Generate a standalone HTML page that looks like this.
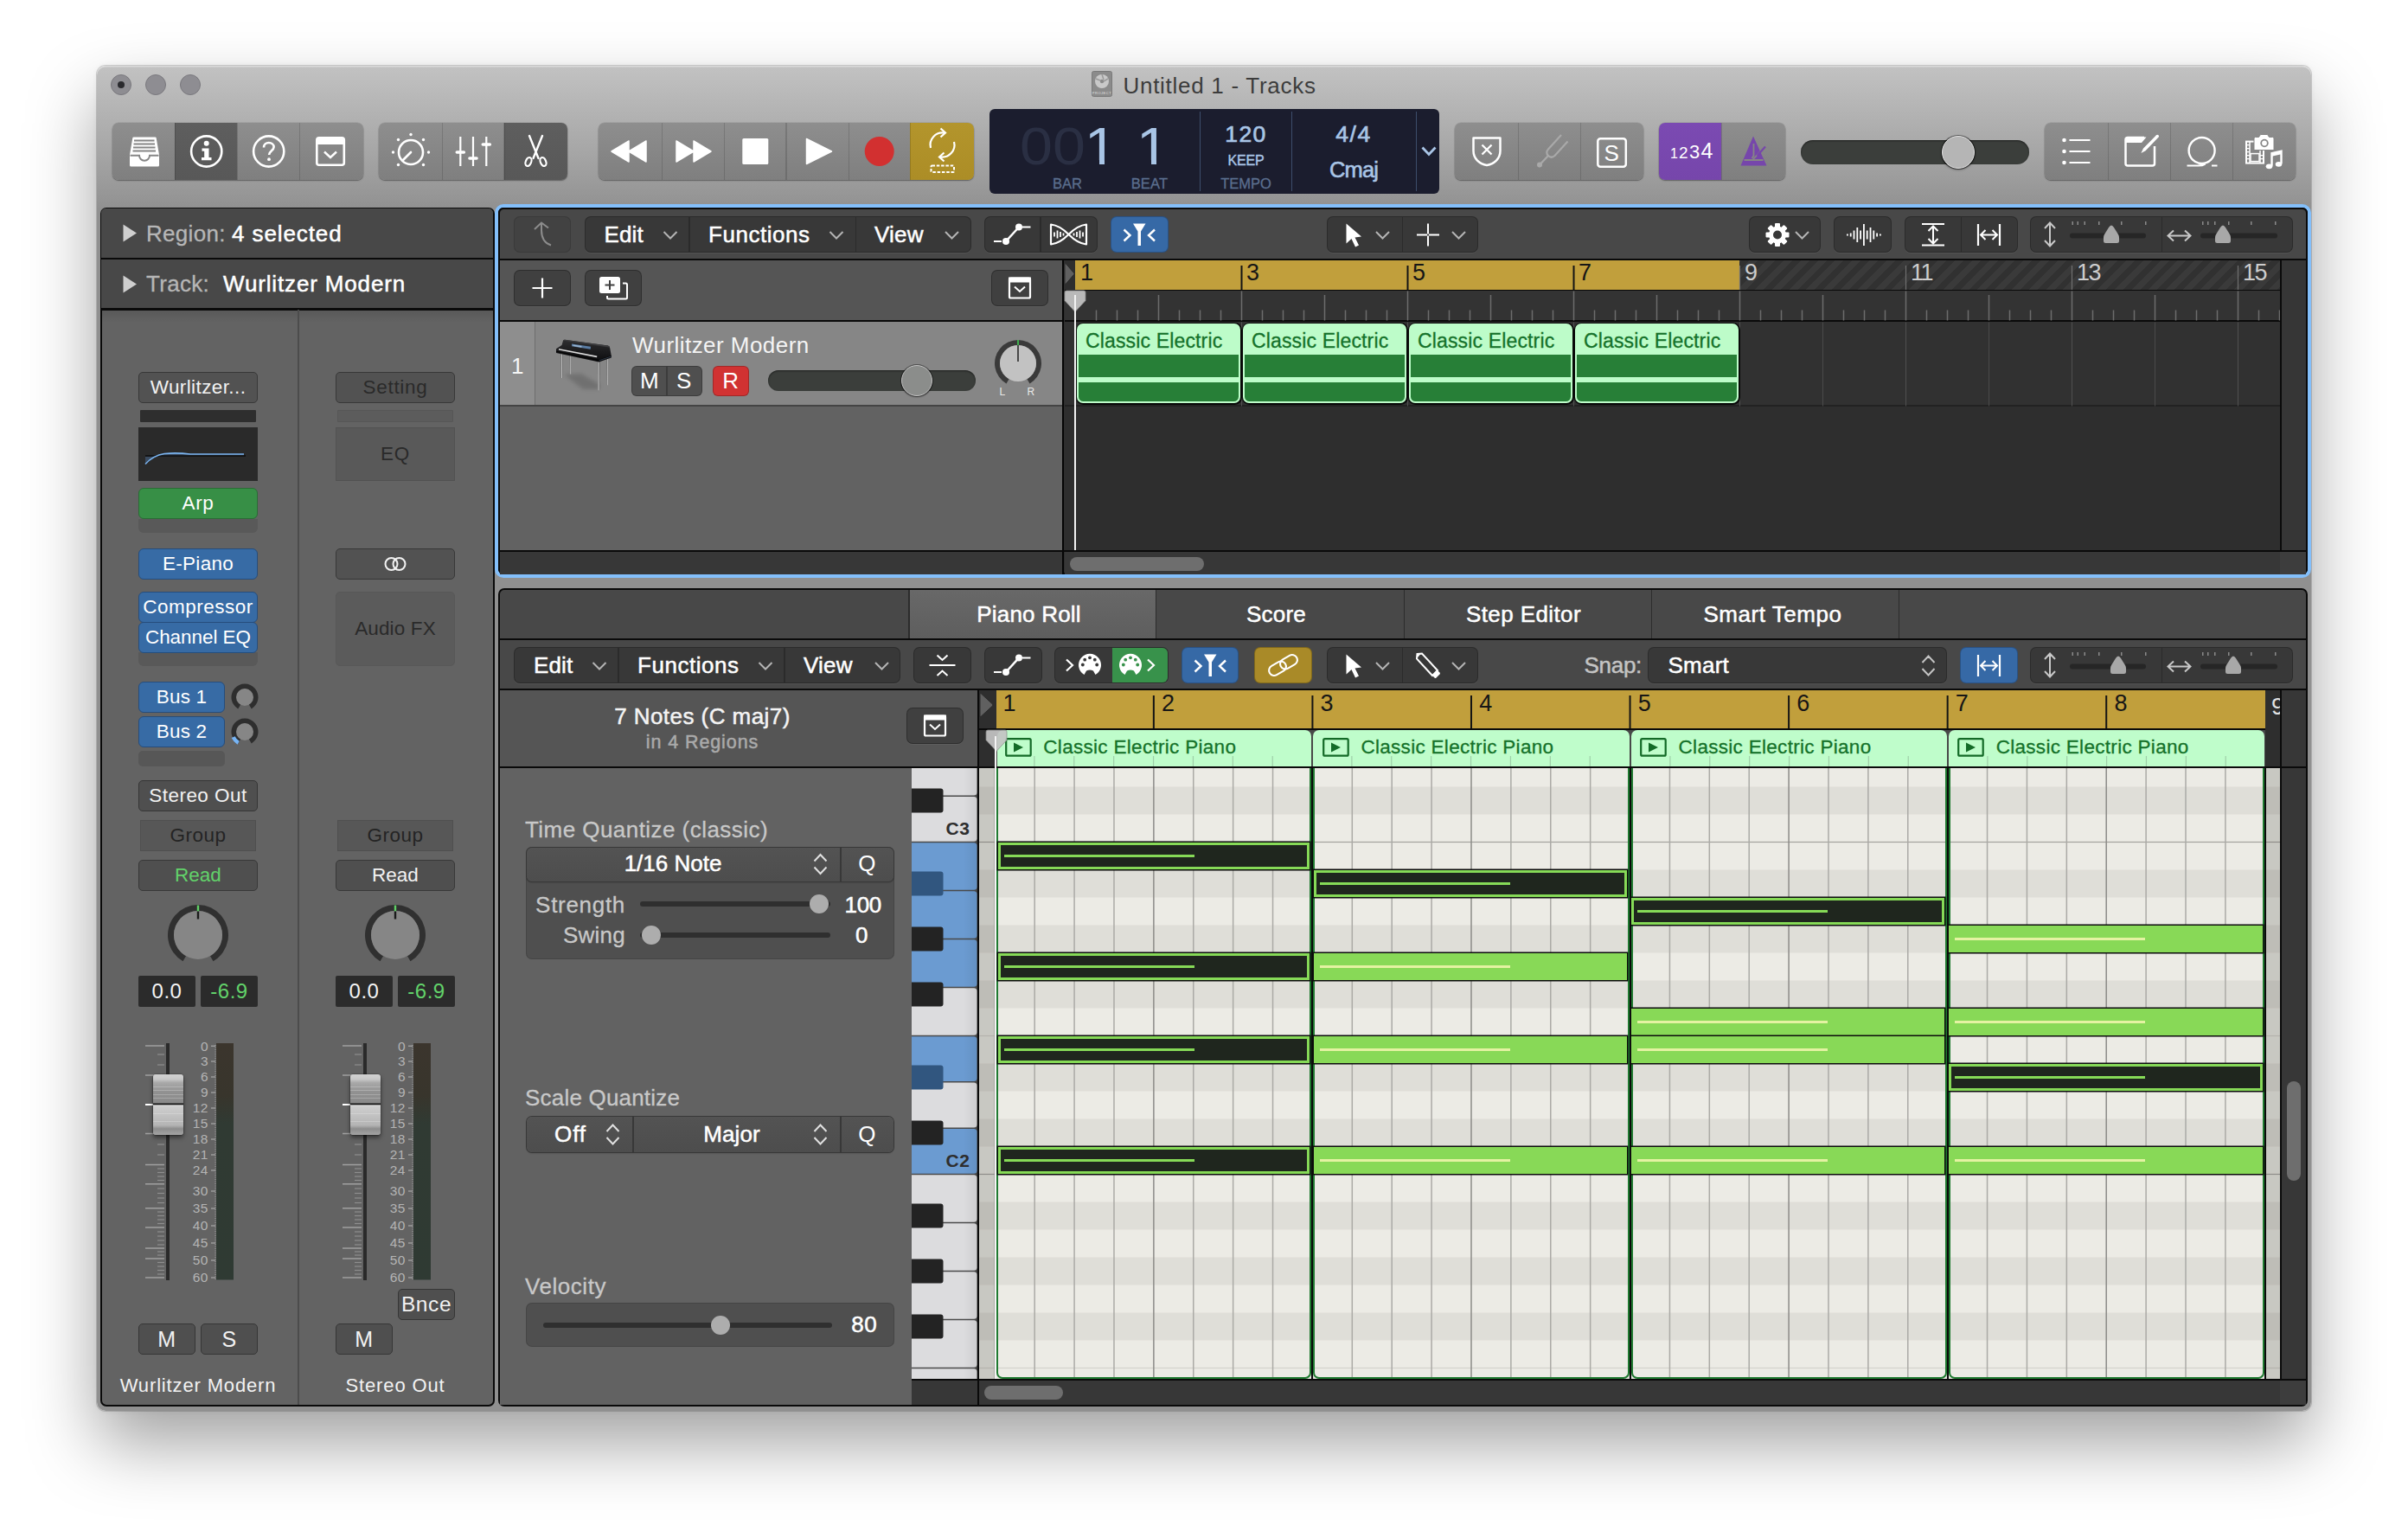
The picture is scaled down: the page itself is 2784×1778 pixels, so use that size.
<!DOCTYPE html>
<html lang="en"><head><meta charset="utf-8"><title>Untitled 1 - Tracks</title>
<style>
html,body{margin:0;padding:0;}
body{width:2784px;height:1778px;position:relative;overflow:hidden;background:#fff;font-family:"Liberation Sans",sans-serif;font-size:26px;color:#fff;letter-spacing:0.02em;}
div,svg{position:absolute;box-sizing:border-box;}
.t{white-space:nowrap;overflow:visible;}
.c{text-align:center;}
.r{text-align:right;}
.m{-webkit-text-stroke:0.5px currentColor;}

</style></head>
<body>
<div style="left:112px;top:76px;width:2560px;height:1555px;border-radius:10px;background:linear-gradient(#c2c2c2 0px,#b8b8b8 36px,#a6a6a6 100px,#969696 150px,#909090 166px,#909090 100%);box-shadow:inset 0 1.5px 0 rgba(255,255,255,0.4),0 0 0 1px rgba(0,0,0,0.16),0 38px 80px 0px rgba(0,0,0,0.37),0 0 6px rgba(0,0,0,0.06);"></div>
<div style="left:128px;top:86px;width:24px;height:24px;border-radius:50%;background:#8e8d92;border:1px solid #7a797e;"><div style="left:7px;top:7px;width:8px;height:8px;border-radius:50%;background:#2a2a2e;"></div></div>
<div style="left:168px;top:86px;width:24px;height:24px;border-radius:50%;background:#8e8d92;border:1px solid #7a797e;"></div>
<div style="left:208px;top:86px;width:24px;height:24px;border-radius:50%;background:#8e8d92;border:1px solid #7a797e;"></div>
<svg style="left:1262px;top:82px;" width="24" height="30" viewBox="0 0 24 30"><rect x="0.5" y="0.5" width="23" height="29" rx="2" fill="#8b8b8b" stroke="#7a7a7a"/><circle cx="12" cy="12" r="8" fill="#c9c9c9"/><circle cx="12" cy="12" r="2.2" fill="#8b8b8b"/><path d="M12 4 L14 10 M19 9 L14 12 M5 9 L10 11" stroke="#9a9a9a" stroke-width="1.5"/><text x="12" y="26.5" font-size="4" text-anchor="middle" fill="#e0e0e0" font-family="Liberation Sans, sans-serif">PROJECT</text></svg>
<div class="t" style="left:1298.5px;top:84px;width:230px;height:30px;line-height:30px;color:#3c3c3c;font-size:26px;letter-spacing:0.72px;">Untitled 1 - Tracks</div>
<div style="left:130px;top:142px;width:290px;height:66px;border-radius:7px;box-shadow:0 1px 1.5px rgba(0,0,0,0.35),0 0 0 0.5px rgba(0,0,0,0.12);overflow:hidden;"><div style="left:0.00px;top:0;width:72.50px;height:66px;background:linear-gradient(#8e8e8e,#7f7f7f);"></div><div style="left:72.00px;top:0;width:72.50px;height:66px;background:linear-gradient(#5e5e5e,#585858);"></div><div style="left:144.00px;top:0;width:72.75px;height:66px;background:linear-gradient(#8e8e8e,#7f7f7f);"></div><div style="left:216.25px;top:0;width:74.25px;height:66px;background:linear-gradient(#8e8e8e,#7f7f7f);"></div><div style="left:71.50px;top:0;width:1.500px;height:66px;background:rgba(0,0,0,0.14);"></div><div style="left:143.50px;top:0;width:1.500px;height:66px;background:rgba(0,0,0,0.14);"></div><div style="left:215.75px;top:0;width:1.500px;height:66px;background:rgba(0,0,0,0.14);"></div></div>
<svg style="left:130px;top:142px;" width="72" height="66" viewBox="0 0 72 66"><path d="M24 16.5h25.5q1 0 1.2 1l3.3 19.5v12q0 1.5-1.5 1.5h-31q-1.500 0-1.500-1.500v-12l3.300-19.500q0.200-1 1.200-1z" fill="#fff"/><path d="M25 20.500h23.500M24.500 24.500h24.500M24 28.500h25.500M23.500 32.500h26.500" stroke="#868686" stroke-width="1.800"/><path d="M20.500 37.800h10.500a6 6 0 0 0 12 0h10.500" stroke="#868686" stroke-width="2" fill="none"/></svg>
<svg style="left:202.25px;top:142px;" width="72" height="66" viewBox="0 0 72 66"><circle cx="36.700" cy="33" r="17.600" fill="none" stroke="#fff" stroke-width="2.600"/><circle cx="36.700" cy="23.800" r="3" fill="#fff"/><path d="M31.500 29.500h8v10.500h3v3.200h-11.500v-3.200h3.200v-7.300h-2.700z" fill="#fff"/></svg>
<svg style="left:274px;top:142px;" width="72" height="66" viewBox="0 0 72 66"><circle cx="36.700" cy="33" r="17.600" fill="none" stroke="#fff" stroke-width="2.600"/><path d="M31 28.500c0-3.500 2.500-5.500 5.800-5.500s5.800 2 5.800 5c0 4-5.500 4.500-5.500 9" fill="none" stroke="#fff" stroke-width="2.600"/><circle cx="37" cy="42.200" r="1.900" fill="#fff"/></svg>
<svg style="left:345.5px;top:142px;" width="72" height="66" viewBox="0 0 72 66"><rect x="20.300" y="17.300" width="31.500" height="31.500" rx="2.500" fill="none" stroke="#fff" stroke-width="2.600"/><rect x="20" y="17" width="32" height="8" fill="#fff"/><path d="M29 33.500l7 6.500l7-6.500" fill="none" stroke="#fff" stroke-width="2.400"/></svg>
<div style="left:438px;top:142px;width:218px;height:66px;border-radius:7px;box-shadow:0 1px 1.5px rgba(0,0,0,0.35),0 0 0 0.5px rgba(0,0,0,0.12);overflow:hidden;"><div style="left:0.00px;top:0;width:73.75px;height:66px;background:linear-gradient(#8e8e8e,#7f7f7f);"></div><div style="left:73.25px;top:0;width:71.75px;height:66px;background:linear-gradient(#8e8e8e,#7f7f7f);"></div><div style="left:144.50px;top:0;width:74.00px;height:66px;background:linear-gradient(#5e5e5e,#585858);"></div><div style="left:72.75px;top:0;width:1.500px;height:66px;background:rgba(0,0,0,0.14);"></div><div style="left:144.00px;top:0;width:1.500px;height:66px;background:rgba(0,0,0,0.14);"></div></div>
<svg style="left:438px;top:142px;" width="72" height="66" viewBox="0 0 72 66"><circle cx="37" cy="34" r="14" fill="none" stroke="#fff" stroke-width="2.600"/><path d="M37 34l-9.500 9.500" stroke="#fff" stroke-width="2.600" stroke-linecap="round"/><circle cx="22.5" cy="48.5" r="1.700" fill="#fff"/><circle cx="16.5" cy="34.0" r="1.700" fill="#fff"/><circle cx="22.5" cy="19.5" r="1.700" fill="#fff"/><circle cx="37.0" cy="13.5" r="1.700" fill="#fff"/><circle cx="51.5" cy="19.5" r="1.700" fill="#fff"/><circle cx="57.5" cy="34.0" r="1.700" fill="#fff"/><circle cx="51.5" cy="48.5" r="1.700" fill="#fff"/></svg>
<svg style="left:510.67px;top:142px;" width="72" height="66" viewBox="0 0 72 66"><path d="M21.300 16v34M36 16v34M51.300 16v34" stroke="#fff" stroke-width="2.200"/><path d="M17.300 34h8M32 41h8M47.300 25h8" stroke="#fff" stroke-width="3.600" stroke-linecap="round"/></svg>
<svg style="left:583.33px;top:142px;" width="72" height="66" viewBox="0 0 72 66"><path d="M29 15l10.500 26M44 15l-10.500 26" stroke="#fff" stroke-width="2.400" stroke-linecap="round"/><ellipse cx="28" cy="45" rx="3.200" ry="5.200" transform="rotate(22 28 45)" fill="none" stroke="#fff" stroke-width="2.200"/><ellipse cx="45" cy="45" rx="3.200" ry="5.200" transform="rotate(-22 45 45)" fill="none" stroke="#fff" stroke-width="2.200"/></svg>
<div style="left:692px;top:142px;width:434px;height:66px;border-radius:7px;box-shadow:0 1px 1.5px rgba(0,0,0,0.35),0 0 0 0.5px rgba(0,0,0,0.12);overflow:hidden;"><div style="left:0.00px;top:0;width:73.50px;height:66px;background:linear-gradient(#8e8e8e,#7f7f7f);"></div><div style="left:73.00px;top:0;width:72.50px;height:66px;background:linear-gradient(#8e8e8e,#7f7f7f);"></div><div style="left:145.00px;top:0;width:72.00px;height:66px;background:linear-gradient(#8e8e8e,#7f7f7f);"></div><div style="left:216.50px;top:0;width:73.00px;height:66px;background:linear-gradient(#8e8e8e,#7f7f7f);"></div><div style="left:289.00px;top:0;width:71.50px;height:66px;background:linear-gradient(#8e8e8e,#7f7f7f);"></div><div style="left:360.00px;top:0;width:74.50px;height:66px;background:linear-gradient(#b3952c,#ac8d26);"></div><div style="left:72.50px;top:0;width:1.500px;height:66px;background:rgba(0,0,0,0.14);"></div><div style="left:144.50px;top:0;width:1.500px;height:66px;background:rgba(0,0,0,0.14);"></div><div style="left:216.00px;top:0;width:1.500px;height:66px;background:rgba(0,0,0,0.14);"></div><div style="left:288.50px;top:0;width:1.500px;height:66px;background:rgba(0,0,0,0.14);"></div><div style="left:359.50px;top:0;width:1.500px;height:66px;background:rgba(0,0,0,0.14);"></div></div>
<svg style="left:692px;top:142px;" width="72" height="66" viewBox="0 0 72 66"><path d="M15 33l20-12v24zM35 33l20-12v24z" fill="#fff" stroke="#fff" stroke-width="1.500" stroke-linejoin="round"/></svg>
<svg style="left:764.33px;top:142px;" width="72" height="66" viewBox="0 0 72 66"><path d="M58 33l-20-12v24zM38 33l-20-12v24z" fill="#fff" stroke="#fff" stroke-width="1.500" stroke-linejoin="round"/></svg>
<svg style="left:836.67px;top:142px;" width="72" height="66" viewBox="0 0 72 66"><rect x="21.300" y="18" width="30" height="30" rx="1.500" fill="#fff"/></svg>
<svg style="left:909px;top:142px;" width="72" height="66" viewBox="0 0 72 66"><path d="M23.500 18.500l29 14.500l-29 14.500z" fill="#fff" stroke="#fff" stroke-width="1.500" stroke-linejoin="round"/></svg>
<svg style="left:981.33px;top:142px;" width="72" height="66" viewBox="0 0 72 66"><circle cx="35.700" cy="33" r="17" fill="#d23030"/></svg>
<svg style="left:1053.67px;top:142px;" width="72" height="66" viewBox="0 0 72 66"><path d="M22 29a14 14 0 0 1 16-17.300" fill="none" stroke="#fff" stroke-width="2.200"/><path d="M33.500 6.500l5.500 5l-5.500 5" fill="none" stroke="#fff" stroke-width="2.200"/><path d="M49 22a14 14 0 0 1-16 17.300" fill="none" stroke="#fff" stroke-width="2.200"/><path d="M37.500 34.500l-5.500 5l5.500 5" fill="none" stroke="#fff" stroke-width="2.200"/><rect x="22.500" y="49.500" width="26.500" height="7.500" rx="1" fill="none" stroke="#fff" stroke-width="2" stroke-dasharray="3.500 1.800"/></svg>
<div style="left:1144px;top:126px;width:520px;height:98px;border-radius:6px;background:#1b1d2e;"></div>
<div style="left:1386.5px;top:129px;width:1.5px;height:92px;background:#3d4d6b;"></div>
<div style="left:1492.5px;top:129px;width:1.5px;height:92px;background:#3d4d6b;"></div>
<div style="left:1636.5px;top:129px;width:1.5px;height:92px;background:#3d4d6b;"></div>
<div class="t" style="left:1180px;top:134px;width:74px;height:70px;line-height:70px;font-size:62px;transform:scaleX(1.1);color:#2a2f43;text-align:center;letter-spacing:0px;transform-origin:50% 50%;">00</div>
<div class="t" style="left:1252.5px;top:134px;width:40px;height:70px;line-height:70px;font-size:62px;transform:scaleX(1.1);color:#a9c5e6;text-align:center;transform-origin:50% 50%;">1</div>
<div class="t" style="left:1312.5px;top:134px;width:40px;height:70px;line-height:70px;font-size:62px;transform:scaleX(1.1);color:#a9c5e6;text-align:center;transform-origin:50% 50%;">1</div>
<div style="left:1257px;top:184.8px;width:13.8px;height:7px;background:#1b1d2e;"></div>
<div style="left:1277px;top:184.8px;width:13px;height:7px;background:#1b1d2e;"></div>
<div style="left:1317px;top:184.8px;width:13.8px;height:7px;background:#1b1d2e;"></div>
<div style="left:1337px;top:184.8px;width:13px;height:7px;background:#1b1d2e;"></div>
<div class="t" style="left:1200px;top:203px;width:68px;height:18px;line-height:18px;font-size:16.500px;color:#5b6f8f;text-align:center;letter-spacing:0.1px;-webkit-text-stroke:0.3px #5b6f8f;">BAR</div>
<div class="t" style="left:1295px;top:203px;width:68px;height:18px;line-height:18px;font-size:16.500px;color:#5b6f8f;text-align:center;letter-spacing:0.2px;-webkit-text-stroke:0.3px #5b6f8f;">BEAT</div>
<div class="t" style="left:1388px;top:140px;width:105px;height:30px;line-height:30px;font-size:26.500px;color:#a9c5e6;text-align:center;letter-spacing:1.5px;-webkit-text-stroke:0.7px #a9c5e6;">120</div>
<div class="t" style="left:1388px;top:177px;width:105px;height:18px;line-height:18px;font-size:16px;color:#a9c5e6;text-align:center;letter-spacing:-0.2px;-webkit-text-stroke:0.4px #a9c5e6;">KEEP</div>
<div class="t" style="left:1388px;top:203px;width:105px;height:18px;line-height:18px;font-size:16.500px;color:#5b6f8f;text-align:center;letter-spacing:0px;-webkit-text-stroke:0.3px #5b6f8f;">TEMPO</div>
<div class="t" style="left:1494px;top:140px;width:142px;height:30px;line-height:30px;font-size:26.500px;color:#a9c5e6;text-align:center;letter-spacing:1.5px;-webkit-text-stroke:0.7px #a9c5e6;">4/4</div>
<div class="t" style="left:1494px;top:180px;width:142px;height:32px;line-height:32px;font-size:25.500px;color:#a9c5e6;text-align:center;letter-spacing:-0.9px;-webkit-text-stroke:0.6px #a9c5e6;">Cmaj</div>
<svg style="left:1640px;top:164px;" width="24" height="22" viewBox="0 0 24 22"><path d="M4.500 6.500l7.500 8l7.500-8" fill="none" stroke="#a9c5e6" stroke-width="2.800"/></svg>
<div style="left:1682px;top:142px;width:218px;height:66px;border-radius:7px;box-shadow:0 1px 1.5px rgba(0,0,0,0.35),0 0 0 0.5px rgba(0,0,0,0.12);overflow:hidden;"><div style="left:0.00px;top:0;width:73.50px;height:66px;background:linear-gradient(#8e8e8e,#7f7f7f);"></div><div style="left:73.00px;top:0;width:72.50px;height:66px;background:linear-gradient(#8e8e8e,#7f7f7f);"></div><div style="left:145.00px;top:0;width:73.50px;height:66px;background:linear-gradient(#8e8e8e,#7f7f7f);"></div><div style="left:72.50px;top:0;width:1.500px;height:66px;background:rgba(0,0,0,0.14);"></div><div style="left:144.50px;top:0;width:1.500px;height:66px;background:rgba(0,0,0,0.14);"></div></div>
<svg style="left:1682px;top:142px;" width="72" height="66" viewBox="0 0 72 66"><path d="M21.500 17.500h31v15c0 9-7 15-15.500 16.500c-8.500-1.500-15.500-7.500-15.500-16.500z" fill="none" stroke="#fff" stroke-width="2.500" stroke-linejoin="round"/><path d="M31.500 25.500l11 11M42.500 25.500l-11 11" stroke="#fff" stroke-width="2.300"/></svg>
<svg style="left:1754.67px;top:142px;" width="72" height="66" viewBox="0 0 72 66"><path d="M50 14l-15 16.500q-3.500 4-0 7.500l0 0q3.500 3.500 7.500 0l15-16.500M34.500 38.500l-8 8.500" fill="none" stroke="#a9a9a9" stroke-width="2.200"/><circle cx="25" cy="48.500" r="3" fill="#a9a9a9"/></svg>
<svg style="left:1827.33px;top:142px;" width="72" height="66" viewBox="0 0 72 66"><rect x="20.300" y="18.300" width="32.500" height="32.500" rx="3" fill="none" stroke="#fff" stroke-width="2.500"/><text x="36.500" y="44" font-size="26" text-anchor="middle" fill="#fff" font-family="Liberation Sans, sans-serif">S</text></svg>
<div style="left:1918px;top:142px;width:146px;height:66px;border-radius:7px;box-shadow:0 1px 1.5px rgba(0,0,0,0.35),0 0 0 0.5px rgba(0,0,0,0.12);overflow:hidden;"><div style="left:0.00px;top:0;width:72.50px;height:66px;background:linear-gradient(#7b4ab2,#7646ab);"></div><div style="left:72.00px;top:0;width:74.50px;height:66px;background:linear-gradient(#8e8e8e,#7f7f7f);"></div><div style="left:71.50px;top:0;width:1.500px;height:66px;background:rgba(0,0,0,0.14);"></div></div>
<svg style="left:1918px;top:142px;" width="72" height="66" viewBox="0 0 72 66"><text font-family="Liberation Sans, sans-serif" fill="#fff" y="41"><tspan x="13" font-size="16">1</tspan><tspan font-size="19" dx="0.700">2</tspan><tspan font-size="22" dx="0.700">3</tspan><tspan font-size="25" dx="0.700">4</tspan></text></svg>
<svg style="left:1991px;top:142px;" width="72" height="66" viewBox="0 0 72 66"><path d="M36 15.500l-14.500 34h30z" fill="#7646ab"/><path d="M25.500 43h22" stroke="#868686" stroke-width="2"/><path d="M36.500 24v14l-2 3M49 28l-13 14" stroke="#868686" stroke-width="1.800" fill="none"/><path d="M50 27.500l-9.500 10.500" stroke="#7646ab" stroke-width="2.200"/></svg>
<div style="left:2082px;top:162px;width:264px;height:28px;border-radius:14px;background:#3b3e3b;box-shadow:inset 0 1px 2px rgba(0,0,0,0.5);"></div>
<div style="left:2245px;top:156.5px;width:38px;height:38px;border-radius:50%;background:#b5b5b5;border:1.5px solid #e2e2e2;box-shadow:0 0 0 1px rgba(0,0,0,0.45),0 1px 3px rgba(0,0,0,0.5);"></div>
<div style="left:2364px;top:142px;width:290px;height:66px;border-radius:7px;box-shadow:0 1px 1.5px rgba(0,0,0,0.35),0 0 0 0.5px rgba(0,0,0,0.12);overflow:hidden;"><div style="left:0.00px;top:0;width:73.50px;height:66px;background:linear-gradient(#8e8e8e,#7f7f7f);"></div><div style="left:73.00px;top:0;width:72.50px;height:66px;background:linear-gradient(#8e8e8e,#7f7f7f);"></div><div style="left:145.00px;top:0;width:72.50px;height:66px;background:linear-gradient(#8e8e8e,#7f7f7f);"></div><div style="left:217.00px;top:0;width:73.50px;height:66px;background:linear-gradient(#8e8e8e,#7f7f7f);"></div><div style="left:72.50px;top:0;width:1.500px;height:66px;background:rgba(0,0,0,0.14);"></div><div style="left:144.50px;top:0;width:1.500px;height:66px;background:rgba(0,0,0,0.14);"></div><div style="left:216.50px;top:0;width:1.500px;height:66px;background:rgba(0,0,0,0.14);"></div></div>
<svg style="left:2364px;top:142px;" width="72" height="66" viewBox="0 0 72 66"><circle cx="22.500" cy="20" r="2.300" fill="#fff"/><circle cx="22.500" cy="33" r="2.300" fill="#fff"/><circle cx="22.500" cy="46" r="2.300" fill="#fff"/><path d="M28.500 20h24M28.500 33h24M28.500 46h24" stroke="#fff" stroke-width="2.200"/></svg>
<svg style="left:2436.5px;top:142px;" width="72" height="66" viewBox="0 0 72 66"><path d="M54 27v20q0 2.500-2.500 2.500h-28.500q-2.500 0-2.500-2.500v-27.500q0-2.500 2.500-2.500h19" fill="none" stroke="#fff" stroke-width="2.500"/><path d="M20.500 18q0-1.500 1.500-1.500h22.500l-5.500 6.500h-18.500z" fill="#fff"/><path d="M56 14.300a1.800 1.800 0 0 1 2.400 2.500l-14.800 15.400l-5.200 2.700l2.600-5.300z" fill="#fff"/><circle cx="57.300" cy="15.300" r="1.600" fill="#fff"/></svg>
<svg style="left:2509px;top:142px;" width="72" height="66" viewBox="0 0 72 66"><circle cx="36.600" cy="32" r="15" fill="none" stroke="#fff" stroke-width="2.400"/><path d="M19.500 49.500h13q5 0 8-2M48 49.500h6.500" stroke="#fff" stroke-width="2.200" fill="none"/></svg>
<svg style="left:2581.5px;top:142px;" width="72" height="66" viewBox="0 0 72 66"><g transform="translate(0 -1.400)"><rect x="15" y="23" width="20" height="25" fill="none" stroke="#fff" stroke-width="2"/><path d="M19 23v25M31 23v25" stroke="#fff" stroke-width="1.500"/><path d="M15 27h4M15 31h4M15 35h4M15 39h4M15 43h4M31 39h4M31 43h4" stroke="#fff" stroke-width="1.300"/><rect x="20" y="37" width="10" height="9" fill="none" stroke="#fff" stroke-width="1.500"/></g><g transform="translate(0.500 -3)"><path d="M25 19.500h4l2-3h8l2 3h4q1.500 0 1.500 1.500v13.500h-23v-13.500q0-1.500 1.500-1.500z" fill="#fff" stroke="#878787" stroke-width="1"/><circle cx="35.500" cy="26.500" r="4.700" fill="#878787"/><circle cx="35.500" cy="26.500" r="2.900" fill="#fff"/></g><g transform="translate(-0.500 2.800)"><path d="M45 47v-14.500l11-2.500v14.500" fill="none" stroke="#fff" stroke-width="2.400"/><path d="M45 32.500l11-2.500v3.500l-11 2.500z" fill="#fff"/><ellipse cx="42" cy="47.500" rx="3.800" ry="2.900" fill="#fff"/><ellipse cx="53" cy="45" rx="3.800" ry="2.900" fill="#fff"/></g></svg>
<div style="left:116px;top:240px;width:456px;height:1386px;background:#636363;border:2px solid #0a0a0a;border-radius:7px;"></div>
<div style="left:117px;top:241px;width:453px;height:57px;background:#484848;border-radius:5px 5px 0 0;"></div>
<div style="left:117px;top:298px;width:453px;height:2px;background:#0a0a0a;"></div>
<div style="left:117px;top:300px;width:453px;height:56px;background:#484848;"></div>
<div style="left:117px;top:356px;width:453px;height:2.5px;background:#0a0a0a;"></div>
<div style="left:117px;top:358.5px;width:453px;height:14px;background:linear-gradient(rgba(0,0,0,0.10),rgba(0,0,0,0));"></div>
<div style="left:344px;top:358px;width:1.5px;height:1266px;background:#4c4c4c;"></div>
<svg style="left:142px;top:259px;" width="17" height="21" viewBox="0 0 17 21"><path d="M0.500 0.500l15.500 10l-15.500 10z" fill="#cfcfcf"/></svg>
<svg style="left:142px;top:318px;" width="17" height="21" viewBox="0 0 17 21"><path d="M0.500 0.500l15.500 10l-15.500 10z" fill="#cfcfcf"/></svg>
<div class="t" style="left:169px;top:254px;width:100px;height:32px;line-height:32px;color:#b6b6b6;font-size:26px;letter-spacing:0.3px;-webkit-text-stroke:0.3px #b6b6b6;">Region:</div>
<div class="t m" style="left:268px;top:254px;width:200px;height:32px;line-height:32px;color:#fff;font-size:26px;letter-spacing:0.9px;">4 selected</div>
<div class="t" style="left:169px;top:312px;width:100px;height:32px;line-height:32px;color:#b6b6b6;font-size:26px;letter-spacing:0.3px;-webkit-text-stroke:0.3px #b6b6b6;">Track:</div>
<div class="t m" style="left:258px;top:312px;width:260px;height:32px;line-height:32px;color:#fff;font-size:26px;letter-spacing:0.85px;">Wurlitzer Modern</div>
<div style="left:160px;top:430px;width:138px;height:36px;background:#525252;border:1.5px solid #383838;border-radius:5px;"></div>
<div class="t" style="left:160px;top:430px;width:138px;height:36px;line-height:36px;font-size:22.500px;text-align:center;letter-spacing:0.7px;color:#f2f2f2;letter-spacing:0.4px;">Wurlitzer...</div>
<div style="left:162px;top:474px;width:134px;height:14px;background:#2e2e2e;border-radius:1px;"></div>
<div style="left:160px;top:494px;width:138px;height:62px;background:#2a2a2a;"></div>
<svg style="left:160px;top:494px;" width="138" height="62" viewBox="0 0 138 62"><path d="M8 33.500l0 8q8-9 22-11q12-1.500 30 0.500l62 0l0 2l-62 0" fill="#4a6a92" opacity="0.5"/><path d="M8 33h116" stroke="#0c0c0c" stroke-width="1.500"/><path d="M8 42.500q9-10 22-12q14-1.500 30 0.500l62 0" fill="none" stroke="#7ab4f0" stroke-width="1.600"/></svg>
<div style="left:160px;top:600px;width:138px;height:16px;background:#595959;border-radius:0 0 6px 6px;"></div>
<div style="left:160px;top:564px;width:138px;height:36px;background:#378f46;border:1.5px solid #2a6c35;border-radius:6px;"></div>
<div class="t" style="left:160px;top:564px;width:138px;height:36px;line-height:36px;font-size:22.500px;text-align:center;letter-spacing:0.7px;color:#fff;">Arp</div>
<div style="left:160px;top:634px;width:138px;height:36px;background:#376ba5;border:1.5px solid #264d7c;border-radius:5px;border-radius:6px;"></div>
<div class="t" style="left:160px;top:634px;width:138px;height:36px;line-height:36px;font-size:22.500px;text-align:center;letter-spacing:0.7px;color:#fff;letter-spacing:0.3px;">E-Piano</div>
<div style="left:160px;top:754px;width:138px;height:16px;background:#595959;border-radius:0 0 6px 6px;"></div>
<div style="left:160px;top:684px;width:138px;height:36px;background:#376ba5;border:1.5px solid #264d7c;border-radius:5px;border-radius:6px;"></div>
<div class="t" style="left:160px;top:684px;width:138px;height:36px;line-height:36px;font-size:22.500px;text-align:center;letter-spacing:0.7px;color:#fff;letter-spacing:0.5px;">Compressor</div>
<div style="left:160px;top:719px;width:138px;height:35.5px;background:#376ba5;border:1.5px solid #264d7c;border-radius:5px;border-radius:6px;"></div>
<div class="t" style="left:160px;top:719px;width:138px;height:35px;line-height:35px;font-size:22.500px;text-align:center;letter-spacing:0.7px;color:#fff;letter-spacing:-0.05px;">Channel EQ</div>
<div style="left:160px;top:788px;width:100px;height:36px;background:#376ba5;border:1.5px solid #264d7c;border-radius:5px;border-radius:6px;"></div>
<div class="t" style="left:160px;top:788px;width:100px;height:36px;line-height:36px;font-size:22.500px;text-align:center;letter-spacing:0.7px;color:#fff;letter-spacing:0.2px;">Bus 1</div>
<svg style="left:266px;top:789px;" width="34" height="34" viewBox="0 0 34 34"><path d="M9.250 30.400A15.500 15.500 0 1 1 24.750 30.400L21.600 25A9.300 9.300 0 1 0 12.400 25z" fill="#2e2e2e"/><circle cx="17" cy="17" r="10" fill="#868686"/></svg>
<div style="left:160px;top:828px;width:100px;height:36px;background:#376ba5;border:1.5px solid #264d7c;border-radius:5px;border-radius:6px;"></div>
<div class="t" style="left:160px;top:828px;width:100px;height:36px;line-height:36px;font-size:22.500px;text-align:center;letter-spacing:0.7px;color:#fff;letter-spacing:0.2px;">Bus 2</div>
<svg style="left:266px;top:829px;" width="34" height="34" viewBox="0 0 34 34"><path d="M9.250 30.400A15.500 15.500 0 1 1 24.750 30.400L21.600 25A9.300 9.300 0 1 0 12.400 25z" fill="#2e2e2e"/><circle cx="17" cy="17" r="10" fill="#868686"/><path d="M9.650 29.730A14.700 14.700 0 0 1 3.700 23.200" fill="none" stroke="#76b4f5" stroke-width="4.400"/></svg>
<div style="left:160px;top:868px;width:100px;height:17.5px;background:#575757;border-radius:5px;"></div>
<div style="left:160px;top:902px;width:138px;height:36px;background:#4f4f4f;border:1.5px solid #363636;border-radius:5px;"></div>
<div class="t" style="left:160px;top:902px;width:138px;height:36px;line-height:36px;font-size:22.500px;text-align:center;letter-spacing:0.7px;color:#f2f2f2;letter-spacing:0.45px;">Stereo Out</div>
<div style="left:162px;top:948px;width:134px;height:36px;background:#575757;border:1px solid #4f4f4f;"></div>
<div class="t" style="left:160px;top:948px;width:138px;height:36px;line-height:36px;font-size:22.500px;text-align:center;letter-spacing:0.7px;color:#242424;letter-spacing:0.45px;">Group</div>
<div style="left:160px;top:994px;width:138px;height:36px;background:#4f4f4f;border:1.5px solid #383838;border-radius:5px;"></div>
<div class="t" style="left:160px;top:994px;width:138px;height:36px;line-height:36px;font-size:22.500px;text-align:center;letter-spacing:0.7px;letter-spacing:0px;color:#62d26a;">Read</div>
<svg style="left:194px;top:1046px;" width="70" height="70" viewBox="0 0 70 70"><path d="M17.50 65.31A35 35 0 1 1 52.50 65.31L49.00 59.25A28 28 0 1 0 21.00 59.25z" fill="#303030"/><circle cx="35" cy="35" r="28" fill="#868686"/><path d="M35 0.500v7" stroke="#5fcf65" stroke-width="2.400"/><path d="M35 7.500v9" stroke="#1a1a1a" stroke-width="2.400"/></svg>
<div style="left:160px;top:1128px;width:66px;height:36px;background:#2b2b2b;border-radius:2px;"></div>
<div class="t" style="left:160px;top:1128px;width:66px;height:36px;line-height:36px;font-size:24px;text-align:center;color:#f4f4f4;">0.0</div>
<div style="left:232px;top:1128px;width:66px;height:36px;background:#2b2b2b;border-radius:2px;"></div>
<div class="t" style="left:232px;top:1128px;width:66px;height:36px;line-height:36px;font-size:24px;text-align:center;color:#62d26a;">-6.9</div>
<svg style="left:160px;top:1206px;overflow:visible;" width="138" height="276" viewBox="0 0 138 276"><rect x="8" y="2.25" width="22" height="1.500" fill="#a0a0a0"/><rect x="8" y="36.25" width="22" height="1.500" fill="#a0a0a0"/><rect x="8" y="103.75" width="22" height="1.500" fill="#a0a0a0"/><rect x="8" y="139.75" width="22" height="1.500" fill="#a0a0a0"/><rect x="8" y="162.00" width="22" height="1.500" fill="#a0a0a0"/><rect x="8" y="190.00" width="22" height="1.500" fill="#a0a0a0"/><rect x="8" y="212.25" width="22" height="1.500" fill="#a0a0a0"/><rect x="8" y="236.25" width="22" height="1.500" fill="#a0a0a0"/><rect x="8" y="248.25" width="22" height="1.500" fill="#a0a0a0"/><rect x="8" y="270.25" width="22" height="1.500" fill="#a0a0a0"/><rect x="22" y="12.40" width="8" height="1.200" fill="#8e8e8e"/><rect x="22" y="24.40" width="8" height="1.200" fill="#8e8e8e"/><rect x="22" y="47.40" width="8" height="1.200" fill="#8e8e8e"/><rect x="22" y="58.40" width="8" height="1.200" fill="#8e8e8e"/><rect x="22" y="81.40" width="8" height="1.200" fill="#8e8e8e"/><rect x="22" y="92.40" width="8" height="1.200" fill="#8e8e8e"/><rect x="22" y="116.40" width="8" height="1.200" fill="#8e8e8e"/><rect x="22" y="128.40" width="8" height="1.200" fill="#8e8e8e"/><rect x="22" y="144.40" width="8" height="1.200" fill="#8e8e8e"/><rect x="22" y="148.90" width="8" height="1.200" fill="#8e8e8e"/><rect x="22" y="153.40" width="8" height="1.200" fill="#8e8e8e"/><rect x="22" y="157.90" width="8" height="1.200" fill="#8e8e8e"/><rect x="22" y="167.40" width="8" height="1.200" fill="#8e8e8e"/><rect x="22" y="172.90" width="8" height="1.200" fill="#8e8e8e"/><rect x="22" y="178.40" width="8" height="1.200" fill="#8e8e8e"/><rect x="22" y="183.90" width="8" height="1.200" fill="#8e8e8e"/><rect x="22" y="194.40" width="8" height="1.200" fill="#8e8e8e"/><rect x="22" y="198.90" width="8" height="1.200" fill="#8e8e8e"/><rect x="22" y="203.40" width="8" height="1.200" fill="#8e8e8e"/><rect x="22" y="207.90" width="8" height="1.200" fill="#8e8e8e"/><rect x="22" y="217.40" width="8" height="1.200" fill="#8e8e8e"/><rect x="22" y="222.40" width="8" height="1.200" fill="#8e8e8e"/><rect x="22" y="227.40" width="8" height="1.200" fill="#8e8e8e"/><rect x="22" y="232.40" width="8" height="1.200" fill="#8e8e8e"/><rect x="22" y="240.40" width="8" height="1.200" fill="#8e8e8e"/><rect x="22" y="244.40" width="8" height="1.200" fill="#8e8e8e"/><rect x="22" y="252.90" width="8" height="1.200" fill="#8e8e8e"/><rect x="22" y="257.40" width="8" height="1.200" fill="#8e8e8e"/><rect x="22" y="261.90" width="8" height="1.200" fill="#8e8e8e"/><rect x="22" y="266.40" width="8" height="1.200" fill="#8e8e8e"/><rect x="32" y="0" width="4" height="274" fill="#2a2a2a"/><rect x="8" y="70" width="10" height="2" fill="#fff"/><defs><linearGradient id="mg0" x1="0" y1="0" x2="0" y2="1"><stop offset="0" stop-color="#3b352d"/><stop offset="0.22" stop-color="#38352c"/><stop offset="0.34" stop-color="#303a33"/><stop offset="1" stop-color="#2f3a33"/></linearGradient></defs><rect x="90" y="0" width="20" height="273.500" fill="url(#mg0)"/><path d="M89 2v272" stroke="#a8a8a8" stroke-width="1" stroke-dasharray="1 1.500"/><rect x="84" y="2.65" width="5" height="1.200" fill="#a8a8a8"/><text x="81" y="8.65" font-size="15.500" text-anchor="end" fill="#b4b4b4" font-family="Liberation Sans, sans-serif" letter-spacing="0.5">0</text><rect x="84" y="20.40" width="5" height="1.200" fill="#a8a8a8"/><text x="81" y="26.40" font-size="15.500" text-anchor="end" fill="#b4b4b4" font-family="Liberation Sans, sans-serif" letter-spacing="0.5">3</text><rect x="84" y="38.40" width="5" height="1.200" fill="#a8a8a8"/><text x="81" y="44.40" font-size="15.500" text-anchor="end" fill="#b4b4b4" font-family="Liberation Sans, sans-serif" letter-spacing="0.5">6</text><rect x="84" y="56.40" width="5" height="1.200" fill="#a8a8a8"/><text x="81" y="62.40" font-size="15.500" text-anchor="end" fill="#b4b4b4" font-family="Liberation Sans, sans-serif" letter-spacing="0.5">9</text><rect x="84" y="74.40" width="5" height="1.200" fill="#a8a8a8"/><text x="81" y="80.40" font-size="15.500" text-anchor="end" fill="#b4b4b4" font-family="Liberation Sans, sans-serif" letter-spacing="0.5">12</text><rect x="84" y="92.40" width="5" height="1.200" fill="#a8a8a8"/><text x="81" y="98.40" font-size="15.500" text-anchor="end" fill="#b4b4b4" font-family="Liberation Sans, sans-serif" letter-spacing="0.5">15</text><rect x="84" y="110.40" width="5" height="1.200" fill="#a8a8a8"/><text x="81" y="116.40" font-size="15.500" text-anchor="end" fill="#b4b4b4" font-family="Liberation Sans, sans-serif" letter-spacing="0.5">18</text><rect x="84" y="128.40" width="5" height="1.200" fill="#a8a8a8"/><text x="81" y="134.40" font-size="15.500" text-anchor="end" fill="#b4b4b4" font-family="Liberation Sans, sans-serif" letter-spacing="0.5">21</text><rect x="84" y="146.40" width="5" height="1.200" fill="#a8a8a8"/><text x="81" y="152.40" font-size="15.500" text-anchor="end" fill="#b4b4b4" font-family="Liberation Sans, sans-serif" letter-spacing="0.5">24</text><rect x="84" y="170.40" width="5" height="1.200" fill="#a8a8a8"/><text x="81" y="176.40" font-size="15.500" text-anchor="end" fill="#b4b4b4" font-family="Liberation Sans, sans-serif" letter-spacing="0.5">30</text><rect x="84" y="190.40" width="5" height="1.200" fill="#a8a8a8"/><text x="81" y="196.40" font-size="15.500" text-anchor="end" fill="#b4b4b4" font-family="Liberation Sans, sans-serif" letter-spacing="0.5">35</text><rect x="84" y="210.40" width="5" height="1.200" fill="#a8a8a8"/><text x="81" y="216.40" font-size="15.500" text-anchor="end" fill="#b4b4b4" font-family="Liberation Sans, sans-serif" letter-spacing="0.5">40</text><rect x="84" y="230.40" width="5" height="1.200" fill="#a8a8a8"/><text x="81" y="236.40" font-size="15.500" text-anchor="end" fill="#b4b4b4" font-family="Liberation Sans, sans-serif" letter-spacing="0.5">45</text><rect x="84" y="250.40" width="5" height="1.200" fill="#a8a8a8"/><text x="81" y="256.40" font-size="15.500" text-anchor="end" fill="#b4b4b4" font-family="Liberation Sans, sans-serif" letter-spacing="0.5">50</text><rect x="84" y="270.40" width="5" height="1.200" fill="#a8a8a8"/><text x="81" y="276.40" font-size="15.500" text-anchor="end" fill="#b4b4b4" font-family="Liberation Sans, sans-serif" letter-spacing="0.5">60</text></svg>
<div style="left:176.5px;top:1242px;width:35px;height:70px;border-radius:3px;background:linear-gradient(#d2d2d2 0,#c8c8c8 8%,#a8a8a8 14%,#909090 30%,#8a8a8a 47%,#1c1c1c 48.500%,#1c1c1c 50%,#d0d0d0 51%,#c0c0c0 70%,#b4b4b4 84%,#8c8c8c 90%,#a4a4a4 100%);box-shadow:0 3px 5px rgba(0,0,0,0.5),0 0 0 0.5px rgba(0,0,0,0.3);"><div style="left:0;top:10px;width:35px;height:50px;background:repeating-linear-gradient(rgba(255,255,255,0) 0,rgba(255,255,255,0) 3.500px,rgba(255,255,255,0.22) 3.500px,rgba(255,255,255,0.22) 4.500px);"></div></div>
<div style="left:160px;top:1530px;width:66px;height:36px;background:#4f4f4f;border:1.5px solid #363636;border-radius:5px;"></div>
<div class="t" style="left:160px;top:1530px;width:66px;height:36px;line-height:36px;font-size:25px;text-align:center;color:#f2f2f2;">M</div>
<div style="left:232px;top:1530px;width:66px;height:36px;background:#4f4f4f;border:1.5px solid #363636;border-radius:5px;"></div>
<div class="t" style="left:232px;top:1530px;width:66px;height:36px;line-height:36px;font-size:25px;text-align:center;color:#f2f2f2;">S</div>
<div class="t" style="left:120px;top:1587px;width:218px;height:30px;line-height:30px;font-size:22px;text-align:center;color:#f2f2f2;letter-spacing:0.85px;">Wurlitzer Modern</div>
<div style="left:388px;top:430px;width:138px;height:36px;background:#525252;border:1.5px solid #383838;border-radius:5px;"></div>
<div class="t" style="left:388px;top:430px;width:138px;height:36px;line-height:36px;font-size:22.500px;text-align:center;letter-spacing:0.7px;color:#2a2a2a;">Setting</div>
<div style="left:390px;top:474px;width:134px;height:14px;background:#5c5c5c;border:1px solid #565656;border-radius:1px;"></div>
<div style="left:388px;top:494px;width:138px;height:62px;background:#595959;border:1px solid #525252;"></div>
<div class="t" style="left:388px;top:494px;width:138px;height:62px;line-height:62px;font-size:22.500px;text-align:center;letter-spacing:0.7px;color:#2a2a2a;">EQ</div>
<div style="left:388px;top:634px;width:138px;height:36px;background:#525252;border:1.5px solid #383838;border-radius:5px;"></div>
<svg style="left:443px;top:640px;" width="28" height="24" viewBox="0 0 28 24"><circle cx="9.500" cy="12" r="7" fill="none" stroke="#f2f2f2" stroke-width="2"/><circle cx="18.500" cy="12" r="7" fill="none" stroke="#f2f2f2" stroke-width="2"/></svg>
<div style="left:388px;top:684px;width:138px;height:86px;background:#5b5b5b;border:1px solid #585858;border-radius:5px;"></div>
<div class="t" style="left:388px;top:684px;width:138px;height:86px;line-height:86px;font-size:22.500px;text-align:center;letter-spacing:0.7px;color:#2a2a2a;letter-spacing:0.15px;">Audio FX</div>
<div style="left:390px;top:948px;width:134px;height:36px;background:#575757;border:1px solid #4f4f4f;"></div>
<div class="t" style="left:388px;top:948px;width:138px;height:36px;line-height:36px;font-size:22.500px;text-align:center;letter-spacing:0.7px;color:#242424;letter-spacing:0.45px;">Group</div>
<div style="left:388px;top:994px;width:138px;height:36px;background:#4f4f4f;border:1.5px solid #383838;border-radius:5px;"></div>
<div class="t" style="left:388px;top:994px;width:138px;height:36px;line-height:36px;font-size:22.500px;text-align:center;letter-spacing:0.7px;letter-spacing:0px;color:#f2f2f2;">Read</div>
<svg style="left:422px;top:1046px;" width="70" height="70" viewBox="0 0 70 70"><path d="M17.50 65.31A35 35 0 1 1 52.50 65.31L49.00 59.25A28 28 0 1 0 21.00 59.25z" fill="#303030"/><circle cx="35" cy="35" r="28" fill="#868686"/><path d="M35 0.500v7" stroke="#5fcf65" stroke-width="2.400"/><path d="M35 7.500v9" stroke="#1a1a1a" stroke-width="2.400"/></svg>
<div style="left:388px;top:1128px;width:66px;height:36px;background:#2b2b2b;border-radius:2px;"></div>
<div class="t" style="left:388px;top:1128px;width:66px;height:36px;line-height:36px;font-size:24px;text-align:center;color:#f4f4f4;">0.0</div>
<div style="left:460px;top:1128px;width:66px;height:36px;background:#2b2b2b;border-radius:2px;"></div>
<div class="t" style="left:460px;top:1128px;width:66px;height:36px;line-height:36px;font-size:24px;text-align:center;color:#62d26a;">-6.9</div>
<svg style="left:388px;top:1206px;overflow:visible;" width="138" height="276" viewBox="0 0 138 276"><rect x="8" y="2.25" width="22" height="1.500" fill="#a0a0a0"/><rect x="8" y="36.25" width="22" height="1.500" fill="#a0a0a0"/><rect x="8" y="103.75" width="22" height="1.500" fill="#a0a0a0"/><rect x="8" y="139.75" width="22" height="1.500" fill="#a0a0a0"/><rect x="8" y="162.00" width="22" height="1.500" fill="#a0a0a0"/><rect x="8" y="190.00" width="22" height="1.500" fill="#a0a0a0"/><rect x="8" y="212.25" width="22" height="1.500" fill="#a0a0a0"/><rect x="8" y="236.25" width="22" height="1.500" fill="#a0a0a0"/><rect x="8" y="248.25" width="22" height="1.500" fill="#a0a0a0"/><rect x="8" y="270.25" width="22" height="1.500" fill="#a0a0a0"/><rect x="22" y="12.40" width="8" height="1.200" fill="#8e8e8e"/><rect x="22" y="24.40" width="8" height="1.200" fill="#8e8e8e"/><rect x="22" y="47.40" width="8" height="1.200" fill="#8e8e8e"/><rect x="22" y="58.40" width="8" height="1.200" fill="#8e8e8e"/><rect x="22" y="81.40" width="8" height="1.200" fill="#8e8e8e"/><rect x="22" y="92.40" width="8" height="1.200" fill="#8e8e8e"/><rect x="22" y="116.40" width="8" height="1.200" fill="#8e8e8e"/><rect x="22" y="128.40" width="8" height="1.200" fill="#8e8e8e"/><rect x="22" y="144.40" width="8" height="1.200" fill="#8e8e8e"/><rect x="22" y="148.90" width="8" height="1.200" fill="#8e8e8e"/><rect x="22" y="153.40" width="8" height="1.200" fill="#8e8e8e"/><rect x="22" y="157.90" width="8" height="1.200" fill="#8e8e8e"/><rect x="22" y="167.40" width="8" height="1.200" fill="#8e8e8e"/><rect x="22" y="172.90" width="8" height="1.200" fill="#8e8e8e"/><rect x="22" y="178.40" width="8" height="1.200" fill="#8e8e8e"/><rect x="22" y="183.90" width="8" height="1.200" fill="#8e8e8e"/><rect x="22" y="194.40" width="8" height="1.200" fill="#8e8e8e"/><rect x="22" y="198.90" width="8" height="1.200" fill="#8e8e8e"/><rect x="22" y="203.40" width="8" height="1.200" fill="#8e8e8e"/><rect x="22" y="207.90" width="8" height="1.200" fill="#8e8e8e"/><rect x="22" y="217.40" width="8" height="1.200" fill="#8e8e8e"/><rect x="22" y="222.40" width="8" height="1.200" fill="#8e8e8e"/><rect x="22" y="227.40" width="8" height="1.200" fill="#8e8e8e"/><rect x="22" y="232.40" width="8" height="1.200" fill="#8e8e8e"/><rect x="22" y="240.40" width="8" height="1.200" fill="#8e8e8e"/><rect x="22" y="244.40" width="8" height="1.200" fill="#8e8e8e"/><rect x="22" y="252.90" width="8" height="1.200" fill="#8e8e8e"/><rect x="22" y="257.40" width="8" height="1.200" fill="#8e8e8e"/><rect x="22" y="261.90" width="8" height="1.200" fill="#8e8e8e"/><rect x="22" y="266.40" width="8" height="1.200" fill="#8e8e8e"/><rect x="32" y="0" width="4" height="274" fill="#2a2a2a"/><rect x="8" y="70" width="10" height="2" fill="#fff"/><defs><linearGradient id="mg228" x1="0" y1="0" x2="0" y2="1"><stop offset="0" stop-color="#3b352d"/><stop offset="0.22" stop-color="#38352c"/><stop offset="0.34" stop-color="#303a33"/><stop offset="1" stop-color="#2f3a33"/></linearGradient></defs><rect x="90" y="0" width="20" height="273.500" fill="url(#mg228)"/><path d="M89 2v272" stroke="#a8a8a8" stroke-width="1" stroke-dasharray="1 1.500"/><rect x="84" y="2.65" width="5" height="1.200" fill="#a8a8a8"/><text x="81" y="8.65" font-size="15.500" text-anchor="end" fill="#b4b4b4" font-family="Liberation Sans, sans-serif" letter-spacing="0.5">0</text><rect x="84" y="20.40" width="5" height="1.200" fill="#a8a8a8"/><text x="81" y="26.40" font-size="15.500" text-anchor="end" fill="#b4b4b4" font-family="Liberation Sans, sans-serif" letter-spacing="0.5">3</text><rect x="84" y="38.40" width="5" height="1.200" fill="#a8a8a8"/><text x="81" y="44.40" font-size="15.500" text-anchor="end" fill="#b4b4b4" font-family="Liberation Sans, sans-serif" letter-spacing="0.5">6</text><rect x="84" y="56.40" width="5" height="1.200" fill="#a8a8a8"/><text x="81" y="62.40" font-size="15.500" text-anchor="end" fill="#b4b4b4" font-family="Liberation Sans, sans-serif" letter-spacing="0.5">9</text><rect x="84" y="74.40" width="5" height="1.200" fill="#a8a8a8"/><text x="81" y="80.40" font-size="15.500" text-anchor="end" fill="#b4b4b4" font-family="Liberation Sans, sans-serif" letter-spacing="0.5">12</text><rect x="84" y="92.40" width="5" height="1.200" fill="#a8a8a8"/><text x="81" y="98.40" font-size="15.500" text-anchor="end" fill="#b4b4b4" font-family="Liberation Sans, sans-serif" letter-spacing="0.5">15</text><rect x="84" y="110.40" width="5" height="1.200" fill="#a8a8a8"/><text x="81" y="116.40" font-size="15.500" text-anchor="end" fill="#b4b4b4" font-family="Liberation Sans, sans-serif" letter-spacing="0.5">18</text><rect x="84" y="128.40" width="5" height="1.200" fill="#a8a8a8"/><text x="81" y="134.40" font-size="15.500" text-anchor="end" fill="#b4b4b4" font-family="Liberation Sans, sans-serif" letter-spacing="0.5">21</text><rect x="84" y="146.40" width="5" height="1.200" fill="#a8a8a8"/><text x="81" y="152.40" font-size="15.500" text-anchor="end" fill="#b4b4b4" font-family="Liberation Sans, sans-serif" letter-spacing="0.5">24</text><rect x="84" y="170.40" width="5" height="1.200" fill="#a8a8a8"/><text x="81" y="176.40" font-size="15.500" text-anchor="end" fill="#b4b4b4" font-family="Liberation Sans, sans-serif" letter-spacing="0.5">30</text><rect x="84" y="190.40" width="5" height="1.200" fill="#a8a8a8"/><text x="81" y="196.40" font-size="15.500" text-anchor="end" fill="#b4b4b4" font-family="Liberation Sans, sans-serif" letter-spacing="0.5">35</text><rect x="84" y="210.40" width="5" height="1.200" fill="#a8a8a8"/><text x="81" y="216.40" font-size="15.500" text-anchor="end" fill="#b4b4b4" font-family="Liberation Sans, sans-serif" letter-spacing="0.5">40</text><rect x="84" y="230.40" width="5" height="1.200" fill="#a8a8a8"/><text x="81" y="236.40" font-size="15.500" text-anchor="end" fill="#b4b4b4" font-family="Liberation Sans, sans-serif" letter-spacing="0.5">45</text><rect x="84" y="250.40" width="5" height="1.200" fill="#a8a8a8"/><text x="81" y="256.40" font-size="15.500" text-anchor="end" fill="#b4b4b4" font-family="Liberation Sans, sans-serif" letter-spacing="0.5">50</text><rect x="84" y="270.40" width="5" height="1.200" fill="#a8a8a8"/><text x="81" y="276.40" font-size="15.500" text-anchor="end" fill="#b4b4b4" font-family="Liberation Sans, sans-serif" letter-spacing="0.5">60</text></svg>
<div style="left:404.5px;top:1242px;width:35px;height:70px;border-radius:3px;background:linear-gradient(#d2d2d2 0,#c8c8c8 8%,#a8a8a8 14%,#909090 30%,#8a8a8a 47%,#1c1c1c 48.500%,#1c1c1c 50%,#d0d0d0 51%,#c0c0c0 70%,#b4b4b4 84%,#8c8c8c 90%,#a4a4a4 100%);box-shadow:0 3px 5px rgba(0,0,0,0.5),0 0 0 0.5px rgba(0,0,0,0.3);"><div style="left:0;top:10px;width:35px;height:50px;background:repeating-linear-gradient(rgba(255,255,255,0) 0,rgba(255,255,255,0) 3.500px,rgba(255,255,255,0.22) 3.500px,rgba(255,255,255,0.22) 4.500px);"></div></div>
<div style="left:388px;top:1530px;width:66px;height:36px;background:#4f4f4f;border:1.5px solid #363636;border-radius:5px;"></div>
<div class="t" style="left:388px;top:1530px;width:66px;height:36px;line-height:36px;font-size:25px;text-align:center;color:#f2f2f2;">M</div>
<div style="left:460px;top:1490px;width:66px;height:36px;background:#4f4f4f;border:1.5px solid #363636;border-radius:5px;"></div>
<div class="t" style="left:460px;top:1490px;width:66px;height:36px;line-height:36px;font-size:24.500px;text-align:center;color:#f2f2f2;letter-spacing:0.6px;">Bnce</div>
<div class="t" style="left:348px;top:1587px;width:218px;height:30px;line-height:30px;font-size:22px;text-align:center;color:#f2f2f2;letter-spacing:0.85px;">Stereo Out</div>
<div style="left:572px;top:236px;width:2100px;height:432px;border:4px solid #83bffb;border-radius:10px;background:#0a0a0a;"></div>
<div style="left:576px;top:240px;width:2092px;height:424px;border:2px solid #0a0a0a;border-radius:6px;background:#2e2e2e;overflow:hidden;"></div>
<div style="left:578px;top:242px;width:2088px;height:57px;background:#484848;border-radius:5px 5px 0 0;"></div>
<div style="left:578px;top:298.5px;width:2088px;height:2px;background:#0a0a0a;"></div>
<div style="left:595px;top:251px;width:64px;height:40px;background:#424242;border-radius:6px;box-shadow:0 0 0 1px #3a3a3a;"></div>
<svg style="left:595px;top:251px;" width="64" height="40" viewBox="0 0 64 40"><path d="M23 14l8-7.500l8 6M31 7v8q0 14 11 17.500" fill="none" stroke="#8c8c8c" stroke-width="2"/></svg>
<div style="left:677px;top:251px;width:444.5px;height:40px;background:#383838;border-radius:6px;box-shadow:0 0 0 1px #2b2b2b,0 1px 0 1px rgba(255,255,255,0.06);"></div>
<div style="left:796px;top:251px;width:1.5px;height:40px;background:#2b2b2b;"></div>
<div style="left:988.5px;top:251px;width:1.5px;height:40px;background:#2b2b2b;"></div>
<div class="t m" style="left:698.5px;top:251px;width:80px;height:40px;line-height:40px;font-size:26px;color:#fff;letter-spacing:0.4px;letter-spacing:0.1px;">Edit</div>
<div class="t m" style="left:819px;top:251px;width:130px;height:40px;line-height:40px;font-size:26px;color:#fff;letter-spacing:0.4px;letter-spacing:0.55px;">Functions</div>
<div class="t m" style="left:1011px;top:251px;width:80px;height:40px;line-height:40px;font-size:26px;color:#fff;letter-spacing:0.4px;letter-spacing:0.2px;">View</div>
<svg style="left:683px;top:251px;" width="438" height="40" viewBox="0 0 438 40"><path d="M84.5 17l7.500 7.500l7.500-7.500" fill="none" stroke="#b4b4b4" stroke-width="2"/><path d="M276.5 17l7.500 7.500l7.500-7.500" fill="none" stroke="#b4b4b4" stroke-width="2"/><path d="M410 17l7.500 7.500l7.500-7.500" fill="none" stroke="#b4b4b4" stroke-width="2"/></svg>
<div style="left:1138.5px;top:251px;width:129px;height:40px;background:#383838;border-radius:6px;box-shadow:0 0 0 1px #2b2b2b,0 1px 0 1px rgba(255,255,255,0.06);"></div>
<div style="left:1202px;top:251px;width:1.5px;height:40px;background:#2b2b2b;"></div>
<svg style="left:1138.5px;top:251px;" width="64" height="40" viewBox="0 0 64 40"><path d="M10 28h9M43 11.500h9.500" stroke="#fff" stroke-width="2"/><path d="M24 28l15-16.500" stroke="#fff" stroke-width="2.600"/><circle cx="24" cy="28" r="4" fill="#fff"/><circle cx="39" cy="11.500" r="4" fill="#fff"/></svg>
<svg style="left:1202.5px;top:251px;" width="64" height="40" viewBox="0 0 64 40"><path d="M12 8.500q10 1 20.500 11.500q10.500 10.500 20.500 11.500v-23q-10 1-20.500 11.500q-10.500 10.500-20.500 11.500z" fill="none" stroke="#fff" stroke-width="2.200" stroke-linejoin="round"/><rect x="15.1" y="17.5" width="1.800" height="5" fill="#fff"/><rect x="18.6" y="15.5" width="1.800" height="9" fill="#fff"/><rect x="22.1" y="17.0" width="1.800" height="6" fill="#fff"/><rect x="25.6" y="18.5" width="1.800" height="3" fill="#fff"/><rect x="37.6" y="18.5" width="1.800" height="3" fill="#fff"/><rect x="41.1" y="17.0" width="1.800" height="6" fill="#fff"/><rect x="44.6" y="15.5" width="1.800" height="9" fill="#fff"/><rect x="48.1" y="17.5" width="1.800" height="5" fill="#fff"/></svg>
<div style="left:1285px;top:251px;width:64.5px;height:40px;background:#3669a6;border-radius:6px;box-shadow:0 0 0 1px #2a5284;"></div>
<svg style="left:1285px;top:251px;" width="64.5" height="40" viewBox="0 0 64.5 40"><path d="M14.500 14.500l7 6.500l-7 6.500M50 14.500l-7 6.500l7 6.500" fill="none" stroke="#fff" stroke-width="2.400"/><path d="M25 7.500h14.500l-5.500 9v16.500h-3.500v-16.500z" fill="#fff"/></svg>
<div style="left:1534.5px;top:251px;width:173px;height:40px;background:#383838;border-radius:6px;box-shadow:0 0 0 1px #2b2b2b,0 1px 0 1px rgba(255,255,255,0.06);"></div>
<div style="left:1620.5px;top:251px;width:1.5px;height:40px;background:#2b2b2b;"></div>
<svg style="left:1534.5px;top:251px;" width="86" height="40" viewBox="0 0 86 40"><path d="M21.500 7.500v23l6-5.500l4.500 9.500l4-2l-4.500-9l7.500-1z" fill="#fff"/><path d="M56 17l7.500 7.500l7.500-7.500" fill="none" stroke="#b4b4b4" stroke-width="2"/></svg>
<svg style="left:1621px;top:251px;" width="86" height="40" viewBox="0 0 86 40"><path d="M30 7.500v26M17 20.500h26" stroke="#fff" stroke-width="2"/><rect x="29" y="19.500" width="2" height="2" fill="#383838"/><path d="M58 17l7.500 7.500l7.500-7.500" fill="none" stroke="#b4b4b4" stroke-width="2"/></svg>
<div style="left:2022.5px;top:251px;width:81px;height:40px;background:#383838;border-radius:6px;box-shadow:0 0 0 1px #2b2b2b,0 1px 0 1px rgba(255,255,255,0.06);"></div>
<svg style="left:2022.5px;top:251px;" width="81" height="40" viewBox="0 0 81 40"><rect x="-3" y="-13.500" width="6" height="8" rx="1" fill="#fff" transform="translate(32 20.500) rotate(0)"/><rect x="-3" y="-13.500" width="6" height="8" rx="1" fill="#fff" transform="translate(32 20.500) rotate(45)"/><rect x="-3" y="-13.500" width="6" height="8" rx="1" fill="#fff" transform="translate(32 20.500) rotate(90)"/><rect x="-3" y="-13.500" width="6" height="8" rx="1" fill="#fff" transform="translate(32 20.500) rotate(135)"/><rect x="-3" y="-13.500" width="6" height="8" rx="1" fill="#fff" transform="translate(32 20.500) rotate(180)"/><rect x="-3" y="-13.500" width="6" height="8" rx="1" fill="#fff" transform="translate(32 20.500) rotate(225)"/><rect x="-3" y="-13.500" width="6" height="8" rx="1" fill="#fff" transform="translate(32 20.500) rotate(270)"/><rect x="-3" y="-13.500" width="6" height="8" rx="1" fill="#fff" transform="translate(32 20.500) rotate(315)"/><circle cx="32" cy="20.500" r="7.500" fill="none" stroke="#fff" stroke-width="5"/><path d="M53 17l7.500 7.500l7.500-7.500" fill="none" stroke="#b4b4b4" stroke-width="2"/></svg>
<div style="left:2120.5px;top:251px;width:65px;height:40px;background:#383838;border-radius:6px;box-shadow:0 0 0 1px #2b2b2b,0 1px 0 1px rgba(255,255,255,0.06);"></div>
<svg style="left:2120.5px;top:251px;" width="65" height="40" viewBox="0 0 65 40"><rect x="14.0" y="19.5" width="1.800" height="2" fill="#fff"/><rect x="17.8" y="18.5" width="1.800" height="4" fill="#fff"/><rect x="21.6" y="15.5" width="1.800" height="10" fill="#fff"/><rect x="25.4" y="12.0" width="1.800" height="17" fill="#fff"/><rect x="29.2" y="15.5" width="1.800" height="10" fill="#fff"/><rect x="33.0" y="8.0" width="1.800" height="25" fill="#fff"/><rect x="36.8" y="15.5" width="1.800" height="10" fill="#fff"/><rect x="40.6" y="12.0" width="1.800" height="17" fill="#fff"/><rect x="44.4" y="15.5" width="1.800" height="10" fill="#fff"/><rect x="48.2" y="18.5" width="1.800" height="4" fill="#fff"/><rect x="52.0" y="19.5" width="1.800" height="2" fill="#fff"/></svg>
<div style="left:2202.5px;top:251px;width:129px;height:40px;background:#383838;border-radius:6px;box-shadow:0 0 0 1px #2b2b2b,0 1px 0 1px rgba(255,255,255,0.06);"></div>
<div style="left:2266.5px;top:251px;width:1.5px;height:40px;background:#2b2b2b;"></div>
<svg style="left:2202.5px;top:251px;" width="64" height="40" viewBox="0 0 64 40"><path d="M19 8h26M19 32.500h26" stroke="#fff" stroke-width="2.200"/><path d="M32 11v18.500M26.500 16l5.500-5.500l5.500 5.500M26.500 25l5.500 5.500l5.500-5.500" fill="none" stroke="#fff" stroke-width="2"/></svg>
<svg style="left:2267px;top:251px;" width="64" height="40" viewBox="0 0 64 40"><path d="M20 8v25M45 8v25" stroke="#fff" stroke-width="2.200"/><path d="M23 20.500h19M28.500 15l-5.500 5.500l5.500 5.500M36.500 15l5.500 5.500l-5.500 5.500" fill="none" stroke="#fff" stroke-width="2"/></svg>
<div style="left:2348px;top:251px;width:302px;height:40px;background:#383838;border-radius:6px;box-shadow:0 0 0 1px #2b2b2b,0 1px 0 1px rgba(255,255,255,0.06);"></div>
<div style="left:2498.5px;top:251px;width:1.5px;height:40px;background:#2b2b2b;"></div>
<svg style="left:2348px;top:251px;" width="302" height="40" viewBox="0 0 302 40"><path d="M22 7v26M16 13l6-6.500l6 6.500M16 27l6 6.500l6-6.500" fill="none" stroke="#c8c8c8" stroke-width="2"/><rect x="45" y="18.500" width="88" height="6" rx="3" fill="#262626"/><rect x="47.5" y="5" width="1.500" height="4" fill="#8a8a8a"/><rect x="53.5" y="5" width="1.500" height="4" fill="#8a8a8a"/><rect x="61.5" y="5" width="1.500" height="4" fill="#8a8a8a"/><rect x="78" y="5" width="1.500" height="4" fill="#8a8a8a"/><rect x="104" y="5" width="1.500" height="4" fill="#8a8a8a"/><rect x="132" y="5" width="1.500" height="4" fill="#8a8a8a"/><path d="M93 9.500q1.500 0 3 2.500l5 8q1 1.800 1 3.500v4q0 2.500-2.500 2.500h-13q-2.500 0-2.500-2.500v-4q0-1.700 1-3.500l5-8q1.500-2.500 3-2.500z" fill="#a8a8a8"/><path d="M159 21.500h25M165 15.500l-6.500 6l6.500 6M178 15.500l6.500 6l-6.500 6" fill="none" stroke="#c8c8c8" stroke-width="2"/><rect x="196" y="18.500" width="89" height="6" rx="3" fill="#262626"/><rect x="198" y="5" width="1.500" height="4" fill="#8a8a8a"/><rect x="204" y="5" width="1.500" height="4" fill="#8a8a8a"/><rect x="212" y="5" width="1.500" height="4" fill="#8a8a8a"/><rect x="228" y="5" width="1.500" height="4" fill="#8a8a8a"/><rect x="254" y="5" width="1.500" height="4" fill="#8a8a8a"/><rect x="282" y="5" width="1.500" height="4" fill="#8a8a8a"/><path d="M222 9.500q1.500 0 3 2.500l5 8q1 1.800 1 3.500v4q0 2.500-2.500 2.500h-13q-2.500 0-2.500-2.500v-4q0-1.700 1-3.500l5-8q1.500-2.500 3-2.500z" fill="#a8a8a8"/></svg>
<div style="left:578px;top:300.5px;width:650px;height:69.5px;background:#555555;"></div>
<div style="left:578px;top:370px;width:650px;height:2px;background:#0a0a0a;"></div>
<div style="left:595px;top:313px;width:64px;height:40px;background:#404040;border-radius:6px;box-shadow:0 0 0 1px #2e2e2e,0 1px 0 1px rgba(255,255,255,0.05);"></div>
<svg style="left:595px;top:313px;" width="64" height="40" viewBox="0 0 64 40"><path d="M32 8.500v23M20.500 20h23" stroke="#fff" stroke-width="2.200"/></svg>
<div style="left:677px;top:313px;width:64px;height:40px;background:#404040;border-radius:6px;box-shadow:0 0 0 1px #2e2e2e,0 1px 0 1px rgba(255,255,255,0.05);"></div>
<svg style="left:677px;top:313px;" width="64" height="40" viewBox="0 0 64 40"><rect x="16" y="7" width="24" height="19" rx="2.500" fill="#fff"/><path d="M28 11v11M22.500 16.500h11" stroke="#404040" stroke-width="2"/><path d="M43 14.500h3.500q1.500 0 1.500 1.500v15q0 1.500-1.500 1.500h-20q-1.500 0-1.500-1.500v-2" fill="none" stroke="#fff" stroke-width="2"/></svg>
<div style="left:1147px;top:313px;width:64px;height:40px;background:#404040;border-radius:6px;box-shadow:0 0 0 1px #2e2e2e,0 1px 0 1px rgba(255,255,255,0.05);"></div>
<svg style="left:1147px;top:313px;" width="64" height="40" viewBox="0 0 64 40"><rect x="20" y="8.500" width="24" height="23" rx="1.500" fill="none" stroke="#fff" stroke-width="2.200"/><rect x="19" y="7.500" width="26" height="6" fill="#fff"/><path d="M26 18.500l6 5.500l6-5.500" fill="none" stroke="#fff" stroke-width="2"/></svg>
<div style="left:578px;top:372px;width:650px;height:96px;background:#868686;"></div>
<div style="left:578px;top:372px;width:41px;height:96px;background:#8e8e8e;border-right:1.500px solid #6e6e6e;"></div>
<div style="left:578px;top:468px;width:650px;height:2px;background:#444444;"></div>
<div style="left:578px;top:470px;width:650px;height:166px;background:#626262;"></div>
<div class="t" style="left:578px;top:403px;width:41px;height:40px;line-height:40px;font-size:26px;color:#f6f6f6;text-align:center;">1</div>
<svg style="left:630px;top:380px;" width="90" height="85" viewBox="0 0 90 85"><defs><linearGradient id="pg" x1="0" y1="0" x2="0" y2="1"><stop offset="0" stop-color="#2e2e30"/><stop offset="1" stop-color="#0c0c0e"/></linearGradient><linearGradient id="lg" x1="0" y1="0" x2="1" y2="0"><stop offset="0" stop-color="#565656"/><stop offset="0.45" stop-color="#c6c6c6"/><stop offset="1" stop-color="#525252"/></linearGradient><filter id="pb" x="-20%" y="-50%" width="140%" height="200%"><feGaussianBlur stdDeviation="2"/></filter></defs><path d="M22 53l20-1l22 13l-2 5l-18 0z" fill="rgba(0,0,0,0.16)" filter="url(#pb)"/><path d="M18.200 28.500h2.600l-0.300 28.400h-2z" fill="url(#lg)"/><path d="M28.700 31h2.400l-0.300 21.500h-1.800z" fill="url(#lg)"/><path d="M71.600 34h2.500l-0.400 31.200h-1.800z" fill="url(#lg)"/><path d="M60.800 37.500h2.800l-0.400 33.800h-2z" fill="url(#lg)"/><path d="M13 23.300l6.500-4.300l1.500-5.200q0.500-1.200 2.200-1l49.500 6.800q2 0.400 2.400 2.200l1.700 9.500v2.300l-14.300 4.800l-49.500-10.400z" fill="url(#pg)"/><path d="M21 13.800q0.500-1.200 2.200-1l49.500 6.800q2 0.400 2.400 2.200l-53.600-8z" fill="#3c3c3e"/><path d="M31 17.600l22 3.200l-0.300 2.900l-21.700-3.500z" fill="#5a7ca3"/><path d="M32.500 18.500l10 1.500l-0.200 1.700l-9.800-1.600z" fill="#a9c4dd" opacity="0.8"/><path d="M16 22.900l44.300 8.600l-0.200 1.700l-44.100-8.800z" fill="#dcdcdc"/><path d="M13 25.500l49.500 10.300l14.300-4.700v1.500l-14.300 4.900l-49.500-10.400z" fill="#050505"/><path d="M62.700 36.700l14-4.600" stroke="#4a5a70" stroke-width="0.600"/></svg>
<div class="t" style="left:731px;top:381px;width:300px;height:36px;line-height:36px;font-size:26px;color:#f4f4f4;letter-spacing:0.45px;">Wurlitzer Modern</div>
<div style="left:731px;top:423.5px;width:80px;height:33.5px;background:#4f4f4f;border-radius:5px;box-shadow:0 0 0 1px #3c3c3c;"></div>
<div style="left:770px;top:423px;width:1.5px;height:34.5px;background:#3c3c3c;"></div>
<div class="t" style="left:731px;top:423px;width:40px;height:34.5px;line-height:34.5px;font-size:26px;color:#fff;text-align:center;">M</div>
<div class="t" style="left:771px;top:423px;width:40px;height:34.5px;line-height:34.5px;font-size:26px;color:#fff;text-align:center;">S</div>
<div style="left:825px;top:423.5px;width:40px;height:33.5px;background:#d13232;border-radius:5px;box-shadow:0 0 0 1px #a02828;"></div>
<div class="t" style="left:824.5px;top:423px;width:41px;height:34.5px;line-height:34.5px;font-size:26px;color:#fff;text-align:center;">R</div>
<div style="left:888px;top:428px;width:240px;height:24px;background:#3b3e3b;border-radius:12px;box-shadow:inset 0 1px 2px rgba(0,0,0,0.5);"></div>
<div style="left:1042px;top:422px;width:36px;height:36px;border-radius:50%;background:#8b8d8b;border:1.500px solid #c4c4c4;box-shadow:0 0 0 1px rgba(0,0,0,0.4),0 1px 2px rgba(0,0,0,0.4);"></div>
<svg style="left:1147px;top:392px;" width="60" height="70" viewBox="0 0 60 70"><path d="M16.50 51.38A27 27 0 1 1 43.50 51.38L40.50 46.19A21 21 0 1 0 19.50 46.19z" fill="#3a3a3a"/><circle cx="30" cy="28" r="21" fill="#c2c2c2"/><path d="M30 1v6" stroke="#3fae4e" stroke-width="2"/><path d="M30 7v19" stroke="#2a2a2a" stroke-width="1.600"/><text x="12" y="64.500" font-size="12" fill="#e8e8e8" text-anchor="middle" font-family="Liberation Sans, sans-serif">L</text><text x="45" y="64.500" font-size="12" fill="#e8e8e8" text-anchor="middle" font-family="Liberation Sans, sans-serif">R</text></svg>
<div style="left:1228px;top:300.5px;width:2.2px;height:363.5px;background:#050505;"></div>
<div style="left:578px;top:636px;width:2088px;height:2px;background:#0a0a0a;"></div>
<div style="left:578px;top:638px;width:650px;height:26px;background:#373737;"></div>
<div style="left:1230.5px;top:638px;width:1405.5px;height:26px;background:#373737;"></div>
<div style="left:2636px;top:638px;width:30px;height:26px;background:#3d3d3d;"></div>
<div style="left:1237px;top:644px;width:155px;height:16px;background:#6e6e6e;border-radius:8px;"></div>
<div style="left:1230.5px;top:300.5px;width:1405.5px;height:34px;background:#3a3a3a;background-image:repeating-linear-gradient(135deg,rgba(0,0,0,0) 0,rgba(0,0,0,0) 7px,rgba(0,0,0,0.16) 7px,rgba(0,0,0,0.16) 14px);"></div>
<div style="left:1230.5px;top:300.5px;width:12.5px;height:34px;background:#2e2e2e;"></div>
<div style="left:1243px;top:300.5px;width:768px;height:34px;background:#c19f3c;"></div>
<div style="left:1230.5px;top:334.5px;width:1405.5px;height:1.5px;background:#0a0a0a;"></div>
<div style="left:1230.5px;top:336px;width:1405.5px;height:34px;background:#333333;"></div>
<div style="left:1230.5px;top:370px;width:1436px;height:2px;background:#0a0a0a;"></div>
<div style="left:2636px;top:300.5px;width:1.5px;height:336px;background:#0a0a0a;"></div>
<div style="left:2637.5px;top:300.5px;width:28.5px;height:335.5px;background:#363636;"></div>
<div style="left:1230.5px;top:372px;width:1405.5px;height:96.5px;background:#313131;"></div>
<div style="left:1230.5px;top:468.3px;width:1405.5px;height:1.5px;background:#222222;"></div>
<svg style="left:1230.5px;top:300.5px;" width="1405.5" height="170" viewBox="0 0 1405.5 170"><text x="18.0" y="23" font-size="27" fill="#161616" font-family="Liberation Sans, sans-serif">1</text><rect x="35.75" y="57.500" width="1.500" height="12" fill="#6c6c6c"/><rect x="59.75" y="57.500" width="1.500" height="12" fill="#6c6c6c"/><rect x="83.75" y="57.500" width="1.500" height="12" fill="#6c6c6c"/><rect x="107.75" y="40" width="1.500" height="29.500" fill="#6c6c6c"/><rect x="131.75" y="57.500" width="1.500" height="12" fill="#6c6c6c"/><rect x="155.75" y="57.500" width="1.500" height="12" fill="#6c6c6c"/><rect x="179.75" y="57.500" width="1.500" height="12" fill="#6c6c6c"/><rect x="203.5" y="6" width="2" height="28" fill="#141414"/><text x="210.0" y="23" font-size="27" fill="#161616" font-family="Liberation Sans, sans-serif">3</text><rect x="203.75" y="35.500" width="1.500" height="34" fill="#6c6c6c"/><rect x="204.0" y="71.500" width="1" height="97" fill="#505050"/><rect x="227.75" y="57.500" width="1.500" height="12" fill="#6c6c6c"/><rect x="251.75" y="57.500" width="1.500" height="12" fill="#6c6c6c"/><rect x="275.75" y="57.500" width="1.500" height="12" fill="#6c6c6c"/><rect x="299.75" y="40" width="1.500" height="29.500" fill="#6c6c6c"/><rect x="323.75" y="57.500" width="1.500" height="12" fill="#6c6c6c"/><rect x="347.75" y="57.500" width="1.500" height="12" fill="#6c6c6c"/><rect x="371.75" y="57.500" width="1.500" height="12" fill="#6c6c6c"/><rect x="395.5" y="6" width="2" height="28" fill="#141414"/><text x="402.0" y="23" font-size="27" fill="#161616" font-family="Liberation Sans, sans-serif">5</text><rect x="395.75" y="35.500" width="1.500" height="34" fill="#6c6c6c"/><rect x="396.0" y="71.500" width="1" height="97" fill="#505050"/><rect x="419.75" y="57.500" width="1.500" height="12" fill="#6c6c6c"/><rect x="443.75" y="57.500" width="1.500" height="12" fill="#6c6c6c"/><rect x="467.75" y="57.500" width="1.500" height="12" fill="#6c6c6c"/><rect x="491.75" y="40" width="1.500" height="29.500" fill="#6c6c6c"/><rect x="515.75" y="57.500" width="1.500" height="12" fill="#6c6c6c"/><rect x="539.75" y="57.500" width="1.500" height="12" fill="#6c6c6c"/><rect x="563.75" y="57.500" width="1.500" height="12" fill="#6c6c6c"/><rect x="587.5" y="6" width="2" height="28" fill="#141414"/><text x="594.0" y="23" font-size="27" fill="#161616" font-family="Liberation Sans, sans-serif">7</text><rect x="587.75" y="35.500" width="1.500" height="34" fill="#6c6c6c"/><rect x="588.0" y="71.500" width="1" height="97" fill="#505050"/><rect x="611.75" y="57.500" width="1.500" height="12" fill="#6c6c6c"/><rect x="635.75" y="57.500" width="1.500" height="12" fill="#6c6c6c"/><rect x="659.75" y="57.500" width="1.500" height="12" fill="#6c6c6c"/><rect x="683.75" y="40" width="1.500" height="29.500" fill="#6c6c6c"/><rect x="707.75" y="57.500" width="1.500" height="12" fill="#6c6c6c"/><rect x="731.75" y="57.500" width="1.500" height="12" fill="#6c6c6c"/><rect x="755.75" y="57.500" width="1.500" height="12" fill="#6c6c6c"/><rect x="779.9" y="6" width="1.2" height="28" fill="#707070"/><text x="786.0" y="23" font-size="27" fill="#cdcdcd" font-family="Liberation Sans, sans-serif">9</text><rect x="779.75" y="35.500" width="1.500" height="34" fill="#6c6c6c"/><rect x="780.0" y="71.500" width="1" height="97" fill="#505050"/><rect x="803.75" y="57.500" width="1.500" height="12" fill="#6c6c6c"/><rect x="827.75" y="57.500" width="1.500" height="12" fill="#6c6c6c"/><rect x="851.75" y="57.500" width="1.500" height="12" fill="#6c6c6c"/><rect x="875.75" y="40" width="1.500" height="29.500" fill="#6c6c6c"/><rect x="876.0" y="71.500" width="1" height="97" fill="#4a4a4a"/><rect x="899.75" y="57.500" width="1.500" height="12" fill="#6c6c6c"/><rect x="923.75" y="57.500" width="1.500" height="12" fill="#6c6c6c"/><rect x="947.75" y="57.500" width="1.500" height="12" fill="#6c6c6c"/><rect x="971.9" y="6" width="1.2" height="28" fill="#707070"/><text x="978.0" y="23" font-size="27" fill="#cdcdcd" letter-spacing="-1.6" font-family="Liberation Sans, sans-serif">11</text><rect x="971.75" y="35.500" width="1.500" height="34" fill="#6c6c6c"/><rect x="972.0" y="71.500" width="1" height="97" fill="#505050"/><rect x="995.75" y="57.500" width="1.500" height="12" fill="#6c6c6c"/><rect x="1019.75" y="57.500" width="1.500" height="12" fill="#6c6c6c"/><rect x="1043.75" y="57.500" width="1.500" height="12" fill="#6c6c6c"/><rect x="1067.75" y="40" width="1.500" height="29.500" fill="#6c6c6c"/><rect x="1068.0" y="71.500" width="1" height="97" fill="#4a4a4a"/><rect x="1091.75" y="57.500" width="1.500" height="12" fill="#6c6c6c"/><rect x="1115.75" y="57.500" width="1.500" height="12" fill="#6c6c6c"/><rect x="1139.75" y="57.500" width="1.500" height="12" fill="#6c6c6c"/><rect x="1163.9" y="6" width="1.2" height="28" fill="#707070"/><text x="1170.0" y="23" font-size="27" fill="#cdcdcd" letter-spacing="-1.6" font-family="Liberation Sans, sans-serif">13</text><rect x="1163.75" y="35.500" width="1.500" height="34" fill="#6c6c6c"/><rect x="1164.0" y="71.500" width="1" height="97" fill="#505050"/><rect x="1187.75" y="57.500" width="1.500" height="12" fill="#6c6c6c"/><rect x="1211.75" y="57.500" width="1.500" height="12" fill="#6c6c6c"/><rect x="1235.75" y="57.500" width="1.500" height="12" fill="#6c6c6c"/><rect x="1259.75" y="40" width="1.500" height="29.500" fill="#6c6c6c"/><rect x="1260.0" y="71.500" width="1" height="97" fill="#4a4a4a"/><rect x="1283.75" y="57.500" width="1.500" height="12" fill="#6c6c6c"/><rect x="1307.75" y="57.500" width="1.500" height="12" fill="#6c6c6c"/><rect x="1331.75" y="57.500" width="1.500" height="12" fill="#6c6c6c"/><rect x="1355.9" y="6" width="1.2" height="28" fill="#707070"/><text x="1362.0" y="23" font-size="27" fill="#cdcdcd" letter-spacing="-1.6" font-family="Liberation Sans, sans-serif">15</text><rect x="1355.75" y="35.500" width="1.500" height="34" fill="#6c6c6c"/><rect x="1356.0" y="71.500" width="1" height="97" fill="#505050"/><rect x="1379.75" y="57.500" width="1.500" height="12" fill="#6c6c6c"/><rect x="1403.75" y="57.500" width="1.500" height="12" fill="#6c6c6c"/></svg>
<svg style="left:1229.5px;top:303px;" width="14" height="28" viewBox="0 0 14 28"><path d="M1 2.500q0-1.500 1.500-0.500l9 10.500q1 1 0 2l-9 10.500q-1.500 1-1.500-0.500z" fill="#606060" stroke="#2a2a2a" stroke-width="1"/></svg>
<div style="left:1242px;top:340px;width:2px;height:296px;background:#f2f2f2;"></div>
<svg style="left:1230px;top:335px;" width="26" height="27" viewBox="0 0 26 27"><path d="M3 1h20q2 0 2 2v9.500l-12 13l-12-13v-9.500q0-2 2-2z" fill="#b9b9b9" stroke="#8a8a8a" stroke-width="0.800"/><rect x="12" y="6" width="2" height="21" fill="#f2f2f2"/></svg>
<div style="left:1243.5px;top:372.5px;width:192px;height:95px;background:#080808;border-radius:8.500px;"></div>
<div style="left:1245px;top:374px;width:189px;height:92px;background:#bdfcc9;border-radius:7px;overflow:hidden;"><div style="left:1.600px;top:36px;width:185.800px;height:25.500px;background:#277f37;"></div><div style="left:1.600px;top:68px;width:185.800px;height:21.700px;background:#277f37;border-radius:0 0 5.500px 5.500px;"></div></div>
<div class="t" style="left:1255px;top:377.5px;width:175px;height:32px;line-height:32px;font-size:23px;color:#15722a;letter-spacing:0.15px;-webkit-text-stroke:0.3px #15722a;">Classic Electric</div>
<div style="left:1435.5px;top:372.5px;width:192px;height:95px;background:#080808;border-radius:8.500px;"></div>
<div style="left:1437px;top:374px;width:189px;height:92px;background:#bdfcc9;border-radius:7px;overflow:hidden;"><div style="left:1.600px;top:36px;width:185.800px;height:25.500px;background:#277f37;"></div><div style="left:1.600px;top:68px;width:185.800px;height:21.700px;background:#277f37;border-radius:0 0 5.500px 5.500px;"></div></div>
<div class="t" style="left:1447px;top:377.5px;width:175px;height:32px;line-height:32px;font-size:23px;color:#15722a;letter-spacing:0.15px;-webkit-text-stroke:0.3px #15722a;">Classic Electric</div>
<div style="left:1627.5px;top:372.5px;width:192px;height:95px;background:#080808;border-radius:8.500px;"></div>
<div style="left:1629px;top:374px;width:189px;height:92px;background:#bdfcc9;border-radius:7px;overflow:hidden;"><div style="left:1.600px;top:36px;width:185.800px;height:25.500px;background:#277f37;"></div><div style="left:1.600px;top:68px;width:185.800px;height:21.700px;background:#277f37;border-radius:0 0 5.500px 5.500px;"></div></div>
<div class="t" style="left:1639px;top:377.5px;width:175px;height:32px;line-height:32px;font-size:23px;color:#15722a;letter-spacing:0.15px;-webkit-text-stroke:0.3px #15722a;">Classic Electric</div>
<div style="left:1819.5px;top:372.5px;width:192px;height:95px;background:#080808;border-radius:8.500px;"></div>
<div style="left:1821px;top:374px;width:189px;height:92px;background:#bdfcc9;border-radius:7px;overflow:hidden;"><div style="left:1.600px;top:36px;width:185.800px;height:25.500px;background:#277f37;"></div><div style="left:1.600px;top:68px;width:185.800px;height:21.700px;background:#277f37;border-radius:0 0 5.500px 5.500px;"></div></div>
<div class="t" style="left:1831px;top:377.5px;width:175px;height:32px;line-height:32px;font-size:23px;color:#15722a;letter-spacing:0.15px;-webkit-text-stroke:0.3px #15722a;">Classic Electric</div>
<div style="left:576px;top:680px;width:2092px;height:946px;border:2px solid #0a0a0a;border-radius:7px;background:#484848;overflow:hidden;"></div>
<div style="left:1050px;top:682px;width:1.5px;height:56px;background:#2c2c2c;"></div>
<div style="left:1051.5px;top:682px;width:284px;height:56px;background:linear-gradient(#686868,#5e5e5e);"></div>
<div style="left:1335.5px;top:682px;width:1.5px;height:56px;background:#2c2c2c;"></div>
<div style="left:1622.5px;top:682px;width:1.5px;height:56px;background:#2c2c2c;"></div>
<div style="left:1908.5px;top:682px;width:1.5px;height:56px;background:#2c2c2c;"></div>
<div style="left:2194.5px;top:682px;width:1.5px;height:56px;background:#2c2c2c;"></div>
<div class="t m" style="left:1047px;top:682px;width:285px;height:56px;line-height:56px;font-size:26px;color:#fff;text-align:center;letter-spacing:0.5px;letter-spacing:0.2px;">Piano Roll</div>
<div class="t m" style="left:1332.5px;top:682px;width:286px;height:56px;line-height:56px;font-size:26px;color:#fff;text-align:center;letter-spacing:0.5px;letter-spacing:0.2px;">Score</div>
<div class="t m" style="left:1619px;top:682px;width:285px;height:56px;line-height:56px;font-size:26px;color:#fff;text-align:center;letter-spacing:0.5px;letter-spacing:0.4px;">Step Editor</div>
<div class="t m" style="left:1907px;top:682px;width:285px;height:56px;line-height:56px;font-size:26px;color:#fff;text-align:center;letter-spacing:0.5px;letter-spacing:0.55px;">Smart Tempo</div>
<div style="left:578px;top:738px;width:2088px;height:2px;background:#0a0a0a;"></div>
<div style="left:595px;top:749px;width:444.5px;height:40px;background:#383838;border-radius:6px;box-shadow:0 0 0 1px #2b2b2b,0 1px 0 1px rgba(255,255,255,0.06);"></div>
<div style="left:714px;top:749px;width:1.5px;height:40px;background:#2b2b2b;"></div>
<div style="left:906px;top:749px;width:1.5px;height:40px;background:#2b2b2b;"></div>
<div class="t m" style="left:617px;top:749px;width:80px;height:40px;line-height:40px;font-size:26px;color:#fff;letter-spacing:0.1px;">Edit</div>
<div class="t m" style="left:737px;top:749px;width:130px;height:40px;line-height:40px;font-size:26px;color:#fff;letter-spacing:0.55px;">Functions</div>
<div class="t m" style="left:929px;top:749px;width:80px;height:40px;line-height:40px;font-size:26px;color:#fff;letter-spacing:0.2px;">View</div>
<svg style="left:595px;top:749px;" width="444.5" height="40" viewBox="0 0 444.5 40"><path d="M90.5 17l7.500 7.500l7.500-7.500" fill="none" stroke="#b4b4b4" stroke-width="2"/><path d="M282.5 17l7.500 7.500l7.500-7.500" fill="none" stroke="#b4b4b4" stroke-width="2"/><path d="M417 17l7.500 7.500l7.500-7.500" fill="none" stroke="#b4b4b4" stroke-width="2"/></svg>
<div style="left:1056.5px;top:749px;width:65px;height:40px;background:#383838;border-radius:6px;box-shadow:0 0 0 1px #2b2b2b,0 1px 0 1px rgba(255,255,255,0.06);"></div>
<svg style="left:1056.5px;top:749px;" width="65" height="40" viewBox="0 0 65 40"><path d="M17.500 20h30" stroke="#fff" stroke-width="2"/><path d="M26.500 8.500l6 5.500l6-5.500M26.500 32l6-5.500l6 5.500" fill="none" stroke="#fff" stroke-width="2"/></svg>
<div style="left:1138.5px;top:749px;width:65px;height:40px;background:#383838;border-radius:6px;box-shadow:0 0 0 1px #2b2b2b,0 1px 0 1px rgba(255,255,255,0.06);"></div>
<svg style="left:1138.5px;top:749px;" width="65" height="40" viewBox="0 0 65 40"><path d="M10 28h9M43 11.500h9.500" stroke="#fff" stroke-width="2"/><path d="M24 28l15-16.500" stroke="#fff" stroke-width="2.600"/><circle cx="24" cy="28" r="4" fill="#fff"/><circle cx="39" cy="11.500" r="4" fill="#fff"/></svg>
<div style="left:1220px;top:749px;width:129.5px;height:40px;background:#383838;border-radius:6px;box-shadow:0 0 0 1px #2b2b2b,0 1px 0 1px rgba(255,255,255,0.06);overflow:hidden;"><div style="left:65.500px;top:0;width:64px;height:40px;background:#38924b;"></div></div>
<svg style="left:1220px;top:749px;" width="129.5" height="40" viewBox="0 0 129.5 40"><path d="M13 13.500l7 6.500l-7 6.500" fill="none" stroke="#fff" stroke-width="2.200"/><path d="M33.5 31.0a13 13 0 1 1 13 0l-2.500-4.500q-4-2-8 0z" fill="#fff"/><circle cx="31.8" cy="19.5" r="1.900" fill="#383838"/><circle cx="34.2" cy="13.7" r="1.900" fill="#383838"/><circle cx="40.0" cy="11.3" r="1.900" fill="#383838"/><circle cx="45.8" cy="13.7" r="1.900" fill="#383838"/><circle cx="48.2" cy="19.5" r="1.900" fill="#383838"/><path d="M80.5 31.0a13 13 0 1 1 13 0l-2.500-4.500q-4-2-8 0z" fill="#fff"/><circle cx="78.8" cy="19.5" r="1.900" fill="#38924b"/><circle cx="81.2" cy="13.7" r="1.900" fill="#38924b"/><circle cx="87.0" cy="11.3" r="1.900" fill="#38924b"/><circle cx="92.8" cy="13.7" r="1.900" fill="#38924b"/><circle cx="95.2" cy="19.5" r="1.900" fill="#38924b"/><path d="M107 13.500l7 6.500l-7 6.500" fill="none" stroke="#fff" stroke-width="2.200"/></svg>
<div style="left:1366.5px;top:749px;width:64.5px;height:40px;background:#3669a6;border-radius:6px;box-shadow:0 0 0 1px #2a5284;"></div>
<svg style="left:1366.5px;top:749px;" width="64.5" height="40" viewBox="0 0 64.5 40"><path d="M14.500 14.500l7 6.500l-7 6.500M50 14.500l-7 6.500l7 6.500" fill="none" stroke="#fff" stroke-width="2.400"/><path d="M25 7.500h14.500l-5.500 9v16.500h-3.500v-16.500z" fill="#fff"/></svg>
<div style="left:1450.5px;top:749px;width:65px;height:40px;background:#a98a28;border-radius:6px;box-shadow:0 0 0 1px #80681c;"></div>
<svg style="left:1450.5px;top:749px;" width="65" height="40" viewBox="0 0 65 40"><g fill="none" stroke="#fff" stroke-width="2.100" transform="rotate(-30 32.500 20)"><rect x="14.500" y="14" width="21" height="12" rx="6"/><rect x="29.500" y="14" width="21" height="12" rx="6"/></g></svg>
<div style="left:1534.5px;top:749px;width:173px;height:40px;background:#383838;border-radius:6px;box-shadow:0 0 0 1px #2b2b2b,0 1px 0 1px rgba(255,255,255,0.06);"></div>
<div style="left:1620.5px;top:749px;width:1.5px;height:40px;background:#2b2b2b;"></div>
<svg style="left:1534.5px;top:749px;" width="86" height="40" viewBox="0 0 86 40"><path d="M21.500 7.500v23l6-5.500l4.500 9.500l4-2l-4.500-9l7.500-1z" fill="#fff"/><path d="M56 17l7.500 7.500l7.500-7.500" fill="none" stroke="#b4b4b4" stroke-width="2"/></svg>
<svg style="left:1621px;top:749px;" width="86" height="40" viewBox="0 0 86 40"><path d="M17.500 7l5.500-0.500l18 19.500l-6 6l-18-19.500z" fill="none" stroke="#fff" stroke-width="2"/><path d="M17 7.500l4.500-0.500l-4 4.500z" fill="#fff"/><path d="M35 32l6-6l2.500 2.500q1 1 0 2l-4 4q-1 1-2 0z" fill="#fff"/><path d="M58 17l7.500 7.500l7.500-7.500" fill="none" stroke="#b4b4b4" stroke-width="2"/></svg>
<div class="t m" style="left:1800px;top:749px;width:98px;height:40px;line-height:40px;font-size:26px;color:#c4c4c4;text-align:right;letter-spacing:-0.3px;">Snap:</div>
<div style="left:1906px;top:749px;width:344px;height:40px;background:#383838;border-radius:6px;box-shadow:0 0 0 1px #2b2b2b,0 1px 0 1px rgba(255,255,255,0.06);"></div>
<div class="t m" style="left:1928.5px;top:749px;width:200px;height:40px;line-height:40px;font-size:26px;color:#fff;letter-spacing:0.25px;">Smart</div>
<svg style="left:2218px;top:749px;" width="24" height="40" viewBox="0 0 24 40"><path d="M4.500 17l7-7.500l7 7.500M4.500 24l7 7.500l7-7.500" fill="none" stroke="#c4c4c4" stroke-width="2"/></svg>
<div style="left:2267px;top:749px;width:64.5px;height:40px;background:#3669a6;border-radius:6px;box-shadow:0 0 0 1px #2a5284;"></div>
<svg style="left:2267px;top:749px;" width="64.5" height="40" viewBox="0 0 64.5 40"><path d="M20 8v25M45 8v25" stroke="#fff" stroke-width="2.200"/><path d="M23 20.500h19M28.500 15l-5.500 5.500l5.500 5.500M36.500 15l5.500 5.500l-5.500 5.500" fill="none" stroke="#fff" stroke-width="2"/></svg>
<div style="left:2348px;top:749px;width:302px;height:40px;background:#383838;border-radius:6px;box-shadow:0 0 0 1px #2b2b2b,0 1px 0 1px rgba(255,255,255,0.06);"></div>
<div style="left:2498.5px;top:749px;width:1.5px;height:40px;background:#2b2b2b;"></div>
<svg style="left:2348px;top:749px;" width="302" height="40" viewBox="0 0 302 40"><path d="M22 7v26M16 13l6-6.500l6 6.500M16 27l6 6.500l6-6.500" fill="none" stroke="#c8c8c8" stroke-width="2"/><rect x="45" y="18.500" width="88" height="6" rx="3" fill="#262626"/><rect x="47.5" y="5" width="1.500" height="4" fill="#8a8a8a"/><rect x="53.5" y="5" width="1.500" height="4" fill="#8a8a8a"/><rect x="61.5" y="5" width="1.500" height="4" fill="#8a8a8a"/><rect x="78" y="5" width="1.500" height="4" fill="#8a8a8a"/><rect x="104" y="5" width="1.500" height="4" fill="#8a8a8a"/><rect x="132" y="5" width="1.500" height="4" fill="#8a8a8a"/><path d="M101 9.500q1.500 0 3 2.500l5 8q1 1.800 1 3.500v4q0 2.500-2.500 2.500h-13q-2.500 0-2.500-2.500v-4q0-1.700 1-3.500l5-8q1.500-2.500 3-2.500z" fill="#a8a8a8"/><path d="M159 21.500h25M165 15.500l-6.500 6l6.500 6M178 15.500l6.500 6l-6.500 6" fill="none" stroke="#c8c8c8" stroke-width="2"/><rect x="196" y="18.500" width="89" height="6" rx="3" fill="#262626"/><rect x="198" y="5" width="1.500" height="4" fill="#8a8a8a"/><rect x="204" y="5" width="1.500" height="4" fill="#8a8a8a"/><rect x="212" y="5" width="1.500" height="4" fill="#8a8a8a"/><rect x="228" y="5" width="1.500" height="4" fill="#8a8a8a"/><rect x="254" y="5" width="1.500" height="4" fill="#8a8a8a"/><rect x="282" y="5" width="1.500" height="4" fill="#8a8a8a"/><path d="M234 9.500q1.500 0 3 2.500l5 8q1 1.800 1 3.500v4q0 2.500-2.500 2.500h-13q-2.500 0-2.500-2.500v-4q0-1.700 1-3.500l5-8q1.500-2.500 3-2.500z" fill="#a8a8a8"/></svg>
<div style="left:578px;top:796px;width:2088px;height:2px;background:#0a0a0a;"></div>
<div style="left:578px;top:798px;width:552px;height:88px;background:#555555;"></div>
<div class="t m" style="left:578px;top:811px;width:468px;height:34px;line-height:34px;font-size:26px;color:#f4f4f4;text-align:center;letter-spacing:0.45px;">7 Notes (C maj7)</div>
<div class="t m" style="left:578px;top:843px;width:468px;height:30px;line-height:30px;font-size:21.500px;color:#aaaaaa;text-align:center;letter-spacing:0.9px;">in 4 Regions</div>
<div style="left:1049px;top:819px;width:64px;height:40px;background:#404040;border-radius:6px;box-shadow:0 0 0 1px #2e2e2e,0 1px 0 1px rgba(255,255,255,0.05);"></div>
<svg style="left:1049px;top:819px;" width="64" height="40" viewBox="0 0 64 40"><rect x="20" y="8.500" width="24" height="23" rx="1.500" fill="none" stroke="#fff" stroke-width="2.200"/><rect x="19" y="7.500" width="26" height="6" fill="#fff"/><path d="M26 18.500l6 5.500l6-5.500" fill="none" stroke="#fff" stroke-width="2"/></svg>
<div style="left:578px;top:886px;width:552px;height:2px;background:#0a0a0a;"></div>
<div style="left:578px;top:888px;width:476px;height:736px;background:#626262;"></div>
<div class="t" style="left:607px;top:943px;width:400px;height:32px;line-height:32px;font-size:26px;color:#c8c8c8;-webkit-text-stroke:0.3px #c8c8c8;letter-spacing:0.45px;">Time Quantize (classic)</div>
<div style="left:609px;top:980px;width:424px;height:128px;background:#4f4f4f;border-radius:6px;box-shadow:0 0 0 1px #454545;"></div>
<div style="left:609px;top:980px;width:424px;height:38.5px;background:linear-gradient(#535353,#4d4d4d);border-radius:6px;box-shadow:0 0 0 1px #383838, 0 1px 2px rgba(0,0,0,0.3);"></div>
<div style="left:971px;top:979px;width:1.5px;height:40px;background:#383838;"></div>
<div class="t m" style="left:608px;top:978px;width:340px;height:41px;line-height:41px;font-size:26px;color:#fff;text-align:center;letter-spacing:0px;">1/16 Note</div>
<svg style="left:937px;top:978px;" width="24" height="41" viewBox="0 0 24 41"><path d="M4.500 17.5l7-7.500l7 7.500M4.500 24.5l7 7.500l7-7.500" fill="none" stroke="#e0e0e0" stroke-width="2"/></svg>
<div class="t" style="left:971px;top:978px;width:63px;height:41px;line-height:41px;font-size:26px;color:#fff;text-align:center;">Q</div>
<div class="t" style="left:600px;top:1029px;width:123px;height:34px;line-height:34px;font-size:26px;color:#c8c8c8;text-align:right;letter-spacing:0.7px;-webkit-text-stroke:0.3px #c8c8c8;">Strength</div>
<div class="t" style="left:600px;top:1064px;width:123px;height:34px;line-height:34px;font-size:26px;color:#c8c8c8;text-align:right;letter-spacing:0.25px;-webkit-text-stroke:0.3px #c8c8c8;">Swing</div>
<div style="left:740px;top:1042px;width:220px;height:6px;background:#2f2f2f;border-radius:3px;"></div>
<div style="left:936px;top:1034px;width:22px;height:22px;background:#adadad;border-radius:50%;"></div>
<div style="left:740px;top:1078px;width:220px;height:6px;background:#2f2f2f;border-radius:3px;"></div>
<div style="left:741.5px;top:1070px;width:22px;height:22px;background:#adadad;border-radius:50%;"></div>
<div class="t m" style="left:940px;top:1029px;width:79px;height:34px;line-height:34px;font-size:26px;color:#fff;text-align:right;letter-spacing:-0.3px;">100</div>
<div class="t m" style="left:940px;top:1064px;width:64px;height:34px;line-height:34px;font-size:26px;color:#fff;text-align:right;">0</div>
<div class="t" style="left:607px;top:1253px;width:400px;height:32px;line-height:32px;font-size:26px;color:#c8c8c8;-webkit-text-stroke:0.3px #c8c8c8;letter-spacing:0.2px;">Scale Quantize</div>
<div style="left:609px;top:1291px;width:424px;height:40.5px;background:linear-gradient(#535353,#4d4d4d);border-radius:6px;box-shadow:0 0 0 1px #383838, 0 1px 2px rgba(0,0,0,0.3);"></div>
<div style="left:731px;top:1290px;width:1.5px;height:42px;background:#383838;"></div>
<div style="left:971px;top:1290px;width:1.5px;height:42px;background:#383838;"></div>
<div class="t m" style="left:608px;top:1290px;width:103px;height:42px;line-height:42px;font-size:26px;color:#fff;text-align:center;letter-spacing:0.9px;">Off</div>
<svg style="left:697px;top:1290px;" width="24" height="42" viewBox="0 0 24 42"><path d="M4.500 18l7-7.500l7 7.500M4.500 25l7 7.500l7-7.500" fill="none" stroke="#e0e0e0" stroke-width="2"/></svg>
<div class="t m" style="left:731px;top:1290px;width:230px;height:42px;line-height:42px;font-size:26px;color:#fff;text-align:center;letter-spacing:0.1px;">Major</div>
<svg style="left:937px;top:1290px;" width="24" height="42" viewBox="0 0 24 42"><path d="M4.500 18l7-7.500l7 7.500M4.500 25l7 7.500l7-7.500" fill="none" stroke="#e0e0e0" stroke-width="2"/></svg>
<div class="t" style="left:971px;top:1290px;width:63px;height:42px;line-height:42px;font-size:26px;color:#fff;text-align:center;">Q</div>
<div class="t" style="left:607px;top:1471px;width:400px;height:32px;line-height:32px;font-size:26px;color:#c8c8c8;-webkit-text-stroke:0.3px #c8c8c8;letter-spacing:0.55px;">Velocity</div>
<div style="left:609px;top:1507px;width:424px;height:48.5px;background:#4f4f4f;border-radius:6px;box-shadow:0 0 0 1px #454545;"></div>
<div style="left:628px;top:1529px;width:334px;height:6px;background:#2f2f2f;border-radius:3px;"></div>
<div style="left:822px;top:1521px;width:22px;height:22px;background:#adadad;border-radius:50%;"></div>
<div class="t m" style="left:940px;top:1514px;width:74px;height:34px;line-height:34px;font-size:26px;color:#fff;text-align:right;letter-spacing:0.4px;">80</div>
<div style="left:1054px;top:888px;width:76px;height:706px;background:#3a3a3a;overflow:hidden;"></div>
<svg style="left:1054px;top:888px;" width="76" height="706" viewBox="0 0 76 706"><rect width="76" height="706" fill="#4a4a4a"/><rect x="-4" y="32.92" width="79.500" height="51.83" rx="3.500" fill="#dcdcde"/><text x="67.500" y="77.00" font-size="21" font-weight="bold" text-anchor="end" fill="#2e2e2e" font-family="Liberation Sans, sans-serif">C3</text><rect x="-4" y="-20.42" width="79.500" height="51.83" rx="3.500" fill="#dcdcde"/><rect x="-4" y="23.50" width="40.500" height="28" rx="3" fill="#232323"/><rect x="-4" y="-40.50" width="40.500" height="28" rx="3" fill="#232323"/><rect x="-4" y="-136.50" width="40.500" height="28" rx="3" fill="#232323"/><rect x="-4" y="-200.50" width="40.500" height="28" rx="3" fill="#232323"/><rect x="-4" y="-264.50" width="40.500" height="28" rx="3" fill="#232323"/><rect x="-4" y="416.92" width="79.500" height="51.83" rx="3.500" fill="#6b9bd1"/><text x="67.500" y="461.00" font-size="21" font-weight="bold" text-anchor="end" fill="#2e2e2e" font-family="Liberation Sans, sans-serif">C2</text><rect x="-4" y="363.58" width="79.500" height="51.83" rx="3.500" fill="#dcdcde"/><rect x="-4" y="310.25" width="79.500" height="51.83" rx="3.500" fill="#6b9bd1"/><rect x="-4" y="254.25" width="79.500" height="54.50" rx="3.500" fill="#dcdcde"/><rect x="-4" y="198.25" width="79.500" height="54.50" rx="3.500" fill="#6b9bd1"/><rect x="-4" y="142.25" width="79.500" height="54.50" rx="3.500" fill="#6b9bd1"/><rect x="-4" y="86.25" width="79.500" height="54.50" rx="3.500" fill="#6b9bd1"/><rect x="-4" y="407.50" width="40.500" height="28" rx="3" fill="#232323"/><rect x="-4" y="343.50" width="40.500" height="28" rx="3" fill="#31567f"/><rect x="-4" y="247.50" width="40.500" height="28" rx="3" fill="#232323"/><rect x="-4" y="183.50" width="40.500" height="28" rx="3" fill="#232323"/><rect x="-4" y="119.50" width="40.500" height="28" rx="3" fill="#31567f"/><rect x="-4" y="747.58" width="79.500" height="51.83" rx="3.500" fill="#dcdcde"/><rect x="-4" y="694.25" width="79.500" height="51.83" rx="3.500" fill="#dcdcde"/><rect x="-4" y="638.25" width="79.500" height="54.50" rx="3.500" fill="#dcdcde"/><rect x="-4" y="582.25" width="79.500" height="54.50" rx="3.500" fill="#dcdcde"/><rect x="-4" y="526.25" width="79.500" height="54.50" rx="3.500" fill="#dcdcde"/><rect x="-4" y="470.25" width="79.500" height="54.50" rx="3.500" fill="#dcdcde"/><rect x="-4" y="791.50" width="40.500" height="28" rx="3" fill="#232323"/><rect x="-4" y="727.50" width="40.500" height="28" rx="3" fill="#232323"/><rect x="-4" y="631.50" width="40.500" height="28" rx="3" fill="#232323"/><rect x="-4" y="567.50" width="40.500" height="28" rx="3" fill="#232323"/><rect x="-4" y="503.50" width="40.500" height="28" rx="3" fill="#232323"/><rect x="-4" y="1175.50" width="40.500" height="28" rx="3" fill="#232323"/><rect x="-4" y="1111.50" width="40.500" height="28" rx="3" fill="#232323"/><rect x="-4" y="1015.50" width="40.500" height="28" rx="3" fill="#232323"/><rect x="-4" y="951.50" width="40.500" height="28" rx="3" fill="#232323"/><rect x="-4" y="887.50" width="40.500" height="28" rx="3" fill="#232323"/><defs><linearGradient id="ksh" x1="0" x2="1"><stop offset="0" stop-color="rgba(0,0,0,0)"/><stop offset="1" stop-color="rgba(0,0,0,0.07)"/></linearGradient></defs><rect x="60" width="16" height="706" fill="url(#ksh)"/></svg>
<div style="left:1130px;top:798px;width:2px;height:826px;background:#0a0a0a;"></div>
<div style="left:1054px;top:1594px;width:1612px;height:2px;background:#0a0a0a;"></div>
<div style="left:1054px;top:1596px;width:76px;height:28px;background:#373737;"></div>
<div style="left:1132px;top:1596px;width:1504px;height:28px;background:#373737;"></div>
<div style="left:2636px;top:1596px;width:30px;height:28px;background:#3d3d3d;"></div>
<div style="left:1138px;top:1602px;width:91px;height:16px;background:#6e6e6e;border-radius:8px;"></div>
<div style="left:1132px;top:798px;width:1504px;height:44px;background:#2e2e2e;"></div>
<div style="left:1152px;top:798px;width:1467px;height:44px;background:#c19f3c;"></div>
<div style="left:1132px;top:842px;width:1504px;height:2px;background:#0a0a0a;"></div>
<div style="left:1132px;top:844px;width:20px;height:42px;background:#2e2e2e;"></div>
<div style="left:2619px;top:798px;width:17px;height:88px;background:#2e2e2e;"></div>
<div style="left:1132px;top:886px;width:1504px;height:2px;background:#0a0a0a;"></div>
<div style="left:2636px;top:798px;width:1.5px;height:796px;background:#0a0a0a;"></div>
<div style="left:2637.5px;top:798px;width:28.5px;height:796px;background:#373737;"></div>
<div style="left:2637.5px;top:886px;width:28.5px;height:2px;background:#0a0a0a;"></div>
<div style="left:2644px;top:1250px;width:16px;height:115px;background:#6e6e6e;border-radius:8px;"></div>
<svg style="left:1132px;top:888px;" width="1504" height="706" viewBox="0 0 1504 706"><rect x="0" y="0" width="1504" height="706" fill="#ecebe5"/><rect x="0" y="21.5" width="1504" height="32.0" fill="#dfded8"/><rect x="0" y="84.9" width="1504" height="1.200" fill="#a3a29e"/><rect x="0" y="117.5" width="1504" height="32.0" fill="#dfded8"/><rect x="0" y="181.5" width="1504" height="32.0" fill="#dfded8"/><rect x="0" y="245.5" width="1504" height="32.0" fill="#dfded8"/><rect x="0" y="308.9" width="1504" height="1.200" fill="#d2d1cc"/><rect x="0" y="341.5" width="1504" height="32.0" fill="#dfded8"/><rect x="0" y="405.5" width="1504" height="32.0" fill="#dfded8"/><rect x="0" y="468.9" width="1504" height="1.200" fill="#a3a29e"/><rect x="0" y="501.5" width="1504" height="32.0" fill="#dfded8"/><rect x="0" y="565.5" width="1504" height="32.0" fill="#dfded8"/><rect x="0" y="629.5" width="1504" height="32.0" fill="#dfded8"/><rect x="0" y="692.9" width="1504" height="1.200" fill="#d2d1cc"/><rect x="0" y="0" width="20" height="706" fill="rgba(60,60,55,0.2)"/><rect x="1487" y="0" width="17" height="706" fill="rgba(60,60,55,0.2)"/><rect x="17.55" y="0" width="1.500" height="706" fill="#8c8b88"/><rect x="63.44" y="0" width="1.500" height="706" fill="#abaaa6"/><rect x="109.33" y="0" width="1.500" height="706" fill="#abaaa6"/><rect x="155.22" y="0" width="1.500" height="706" fill="#abaaa6"/><rect x="201.11" y="0" width="1.500" height="706" fill="#8c8b88"/><rect x="247.00" y="0" width="1.500" height="706" fill="#abaaa6"/><rect x="292.89" y="0" width="1.500" height="706" fill="#abaaa6"/><rect x="338.78" y="0" width="1.500" height="706" fill="#abaaa6"/><rect x="384.67" y="0" width="1.500" height="706" fill="#8c8b88"/><rect x="430.56" y="0" width="1.500" height="706" fill="#abaaa6"/><rect x="476.45" y="0" width="1.500" height="706" fill="#abaaa6"/><rect x="522.34" y="0" width="1.500" height="706" fill="#abaaa6"/><rect x="568.23" y="0" width="1.500" height="706" fill="#8c8b88"/><rect x="614.12" y="0" width="1.500" height="706" fill="#abaaa6"/><rect x="660.01" y="0" width="1.500" height="706" fill="#abaaa6"/><rect x="705.90" y="0" width="1.500" height="706" fill="#abaaa6"/><rect x="751.79" y="0" width="1.500" height="706" fill="#8c8b88"/><rect x="797.68" y="0" width="1.500" height="706" fill="#abaaa6"/><rect x="843.57" y="0" width="1.500" height="706" fill="#abaaa6"/><rect x="889.46" y="0" width="1.500" height="706" fill="#abaaa6"/><rect x="935.35" y="0" width="1.500" height="706" fill="#8c8b88"/><rect x="981.24" y="0" width="1.500" height="706" fill="#abaaa6"/><rect x="1027.13" y="0" width="1.500" height="706" fill="#abaaa6"/><rect x="1073.02" y="0" width="1.500" height="706" fill="#abaaa6"/><rect x="1118.91" y="0" width="1.500" height="706" fill="#8c8b88"/><rect x="1164.80" y="0" width="1.500" height="706" fill="#abaaa6"/><rect x="1210.69" y="0" width="1.500" height="706" fill="#abaaa6"/><rect x="1256.58" y="0" width="1.500" height="706" fill="#abaaa6"/><rect x="1302.47" y="0" width="1.500" height="706" fill="#8c8b88"/><rect x="1348.36" y="0" width="1.500" height="706" fill="#abaaa6"/><rect x="1394.25" y="0" width="1.500" height="706" fill="#abaaa6"/><rect x="1440.14" y="0" width="1.500" height="706" fill="#abaaa6"/><rect x="1486.03" y="0" width="1.500" height="706" fill="#8c8b88"/></svg>
<svg style="left:1132px;top:798px;" width="1504" height="44" viewBox="0 0 1504 44"><text x="27.50" y="24" font-size="27" fill="#161616" font-family="Liberation Sans, sans-serif">1</text><rect x="200.86" y="6" width="2" height="38" fill="#141414"/><text x="211.06" y="24" font-size="27" fill="#161616" font-family="Liberation Sans, sans-serif">2</text><rect x="384.42" y="6" width="2" height="38" fill="#141414"/><text x="394.62" y="24" font-size="27" fill="#161616" font-family="Liberation Sans, sans-serif">3</text><rect x="567.98" y="6" width="2" height="38" fill="#141414"/><text x="578.18" y="24" font-size="27" fill="#161616" font-family="Liberation Sans, sans-serif">4</text><rect x="751.54" y="6" width="2" height="38" fill="#141414"/><text x="761.74" y="24" font-size="27" fill="#161616" font-family="Liberation Sans, sans-serif">5</text><rect x="935.10" y="6" width="2" height="38" fill="#141414"/><text x="945.30" y="24" font-size="27" fill="#161616" font-family="Liberation Sans, sans-serif">6</text><rect x="1118.66" y="6" width="2" height="38" fill="#141414"/><text x="1128.86" y="24" font-size="27" fill="#161616" font-family="Liberation Sans, sans-serif">7</text><rect x="1302.22" y="6" width="2" height="38" fill="#141414"/><text x="1312.42" y="24" font-size="27" fill="#161616" font-family="Liberation Sans, sans-serif">8</text></svg>
<div class="t" style="left:2626px;top:800px;width:10px;height:34px;line-height:34px;font-size:27px;color:#e2e2e2;overflow:hidden;">9</div>
<svg style="left:1132px;top:800px;" width="18" height="32" viewBox="0 0 18 32"><path d="M1 2.500q0-1.500 1.500-0.500l13 12q1 1 0 2l-13 12q-1.500 1-1.500-0.500z" fill="#606060" stroke="#2a2a2a" stroke-width="1"/></svg>
<div style="left:1152.5px;top:844px;width:363.9200000000001px;height:42px;background:#bffdcb;border-radius:7px 7px 0 0;"></div>
<svg style="left:1150.3px;top:844px;" width="367" height="42" viewBox="0 0 367 42"><rect x="45.29" y="30" width="1.200" height="12" fill="#9fcfa9"/><rect x="91.18" y="30" width="1.200" height="12" fill="#9fcfa9"/><rect x="137.07" y="30" width="1.200" height="12" fill="#9fcfa9"/><rect x="182.96" y="30" width="1.200" height="12" fill="#9fcfa9"/><rect x="228.85" y="30" width="1.200" height="12" fill="#9fcfa9"/><rect x="274.74" y="30" width="1.200" height="12" fill="#9fcfa9"/><rect x="320.63" y="30" width="1.200" height="12" fill="#9fcfa9"/></svg>
<svg style="left:1161.8px;top:852.5px;" width="32" height="22" viewBox="0 0 32 22"><rect x="1.200" y="1.200" width="28.500" height="19.500" rx="1.500" fill="none" stroke="#136a27" stroke-width="2.200"/><path d="M10 5.500l11 5.500l-11 5.500z" fill="#136a27"/></svg>
<div class="t" style="left:1206.3px;top:847.5px;width:300px;height:32px;line-height:32px;font-size:22.500px;color:#15722a;letter-spacing:0.3px;-webkit-text-stroke:0.3px #15722a;">Classic Electric Piano</div>
<div style="left:1152px;top:888px;width:364.4200000000001px;height:706px;border:2px solid #1f7a30;border-top:none;border-radius:0 0 7px 7px;"></div>
<div style="left:1516.42px;top:886px;width:2px;height:708px;background:#0a0a0a;"></div>
<div style="left:1518.42px;top:844px;width:365.1199999999999px;height:42px;background:#bffdcb;border-radius:7px 7px 0 0;"></div>
<svg style="left:1517.42px;top:844px;" width="367" height="42" viewBox="0 0 367 42"><rect x="45.29" y="30" width="1.200" height="12" fill="#9fcfa9"/><rect x="91.18" y="30" width="1.200" height="12" fill="#9fcfa9"/><rect x="137.07" y="30" width="1.200" height="12" fill="#9fcfa9"/><rect x="182.96" y="30" width="1.200" height="12" fill="#9fcfa9"/><rect x="228.85" y="30" width="1.200" height="12" fill="#9fcfa9"/><rect x="274.74" y="30" width="1.200" height="12" fill="#9fcfa9"/><rect x="320.63" y="30" width="1.200" height="12" fill="#9fcfa9"/></svg>
<svg style="left:1528.92px;top:852.5px;" width="32" height="22" viewBox="0 0 32 22"><rect x="1.200" y="1.200" width="28.500" height="19.500" rx="1.500" fill="none" stroke="#136a27" stroke-width="2.200"/><path d="M10 5.500l11 5.500l-11 5.500z" fill="#136a27"/></svg>
<div class="t" style="left:1573.42px;top:847.5px;width:300px;height:32px;line-height:32px;font-size:22.500px;color:#15722a;letter-spacing:0.3px;-webkit-text-stroke:0.3px #15722a;">Classic Electric Piano</div>
<div style="left:1518.42px;top:888px;width:365.1199999999999px;height:706px;border:2px solid #1f7a30;border-top:none;border-radius:0 0 7px 7px;"></div>
<div style="left:1883.54px;top:886px;width:2px;height:708px;background:#0a0a0a;"></div>
<div style="left:1885.54px;top:844px;width:365.1199999999999px;height:42px;background:#bffdcb;border-radius:7px 7px 0 0;"></div>
<svg style="left:1884.54px;top:844px;" width="367" height="42" viewBox="0 0 367 42"><rect x="45.29" y="30" width="1.200" height="12" fill="#9fcfa9"/><rect x="91.18" y="30" width="1.200" height="12" fill="#9fcfa9"/><rect x="137.07" y="30" width="1.200" height="12" fill="#9fcfa9"/><rect x="182.96" y="30" width="1.200" height="12" fill="#9fcfa9"/><rect x="228.85" y="30" width="1.200" height="12" fill="#9fcfa9"/><rect x="274.74" y="30" width="1.200" height="12" fill="#9fcfa9"/><rect x="320.63" y="30" width="1.200" height="12" fill="#9fcfa9"/></svg>
<svg style="left:1896.04px;top:852.5px;" width="32" height="22" viewBox="0 0 32 22"><rect x="1.200" y="1.200" width="28.500" height="19.500" rx="1.500" fill="none" stroke="#136a27" stroke-width="2.200"/><path d="M10 5.500l11 5.500l-11 5.500z" fill="#136a27"/></svg>
<div class="t" style="left:1940.54px;top:847.5px;width:300px;height:32px;line-height:32px;font-size:22.500px;color:#15722a;letter-spacing:0.3px;-webkit-text-stroke:0.3px #15722a;">Classic Electric Piano</div>
<div style="left:1885.54px;top:888px;width:365.1199999999999px;height:706px;border:2px solid #1f7a30;border-top:none;border-radius:0 0 7px 7px;"></div>
<div style="left:2250.66px;top:886px;width:2px;height:708px;background:#0a0a0a;"></div>
<div style="left:2252.66px;top:844px;width:365.1199999999999px;height:42px;background:#bffdcb;border-radius:7px 7px 0 0;"></div>
<svg style="left:2251.66px;top:844px;" width="367" height="42" viewBox="0 0 367 42"><rect x="45.29" y="30" width="1.200" height="12" fill="#9fcfa9"/><rect x="91.18" y="30" width="1.200" height="12" fill="#9fcfa9"/><rect x="137.07" y="30" width="1.200" height="12" fill="#9fcfa9"/><rect x="182.96" y="30" width="1.200" height="12" fill="#9fcfa9"/><rect x="228.85" y="30" width="1.200" height="12" fill="#9fcfa9"/><rect x="274.74" y="30" width="1.200" height="12" fill="#9fcfa9"/><rect x="320.63" y="30" width="1.200" height="12" fill="#9fcfa9"/></svg>
<svg style="left:2263.16px;top:852.5px;" width="32" height="22" viewBox="0 0 32 22"><rect x="1.200" y="1.200" width="28.500" height="19.500" rx="1.500" fill="none" stroke="#136a27" stroke-width="2.200"/><path d="M10 5.500l11 5.500l-11 5.500z" fill="#136a27"/></svg>
<div class="t" style="left:2307.66px;top:847.5px;width:300px;height:32px;line-height:32px;font-size:22.500px;color:#15722a;letter-spacing:0.3px;-webkit-text-stroke:0.3px #15722a;">Classic Electric Piano</div>
<div style="left:2252.66px;top:888px;width:365.1199999999999px;height:706px;border:2px solid #1f7a30;border-top:none;border-radius:0 0 7px 7px;"></div>
<div style="left:2617.7799999999997px;top:886px;width:2px;height:708px;background:#0a0a0a;"></div>
<div style="left:1153.8px;top:974.25px;width:360.4200000000001px;height:30.5px;background:#1f261e;border:3.500px solid #86da57;box-shadow:0 0 0 1.500px #0c0c0c;"></div>
<div style="left:1160.8px;top:988.0px;width:220px;height:3px;background:#86da57;"></div>
<div style="left:1153.8px;top:1102.25px;width:360.4200000000001px;height:30.5px;background:#1f261e;border:3.500px solid #86da57;box-shadow:0 0 0 1.500px #0c0c0c;"></div>
<div style="left:1160.8px;top:1116.0px;width:220px;height:3px;background:#86da57;"></div>
<div style="left:1153.8px;top:1198.25px;width:360.4200000000001px;height:30.5px;background:#1f261e;border:3.500px solid #86da57;box-shadow:0 0 0 1.500px #0c0c0c;"></div>
<div style="left:1160.8px;top:1212.0px;width:220px;height:3px;background:#86da57;"></div>
<div style="left:1153.8px;top:1326.25px;width:360.4200000000001px;height:30.5px;background:#1f261e;border:3.500px solid #86da57;box-shadow:0 0 0 1.500px #0c0c0c;"></div>
<div style="left:1160.8px;top:1340.0px;width:220px;height:3px;background:#86da57;"></div>
<div style="left:1518.6200000000001px;top:1006.25px;width:362.7199999999998px;height:30.5px;background:#1f261e;border:3.500px solid #86da57;box-shadow:0 0 0 1.500px #0c0c0c;"></div>
<div style="left:1525.6200000000001px;top:1020.0px;width:220px;height:3px;background:#86da57;"></div>
<div style="left:1518.6200000000001px;top:1102.25px;width:362.7199999999998px;height:30.5px;background:#88d957;box-shadow:0 0 0 1.500px #0c0c0c;"></div>
<div style="left:1525.6200000000001px;top:1116.0px;width:220px;height:3px;background:#e4f2a2;"></div>
<div style="left:1518.6200000000001px;top:1198.25px;width:362.7199999999998px;height:30.5px;background:#88d957;box-shadow:0 0 0 1.500px #0c0c0c;"></div>
<div style="left:1525.6200000000001px;top:1212.0px;width:220px;height:3px;background:#e4f2a2;"></div>
<div style="left:1518.6200000000001px;top:1326.25px;width:362.7199999999998px;height:30.5px;background:#88d957;box-shadow:0 0 0 1.500px #0c0c0c;"></div>
<div style="left:1525.6200000000001px;top:1340.0px;width:220px;height:3px;background:#e4f2a2;"></div>
<div style="left:1885.74px;top:1038.25px;width:362.72px;height:30.5px;background:#1f261e;border:3.500px solid #86da57;box-shadow:0 0 0 1.500px #0c0c0c;"></div>
<div style="left:1892.74px;top:1052.0px;width:220px;height:3px;background:#86da57;"></div>
<div style="left:1885.74px;top:1166.25px;width:362.72px;height:30.5px;background:#88d957;box-shadow:0 0 0 1.500px #0c0c0c;"></div>
<div style="left:1892.74px;top:1180.0px;width:220px;height:3px;background:#e4f2a2;"></div>
<div style="left:1885.74px;top:1198.25px;width:362.72px;height:30.5px;background:#88d957;box-shadow:0 0 0 1.500px #0c0c0c;"></div>
<div style="left:1892.74px;top:1212.0px;width:220px;height:3px;background:#e4f2a2;"></div>
<div style="left:1885.74px;top:1326.25px;width:362.72px;height:30.5px;background:#88d957;box-shadow:0 0 0 1.500px #0c0c0c;"></div>
<div style="left:1892.74px;top:1340.0px;width:220px;height:3px;background:#e4f2a2;"></div>
<div style="left:2252.8599999999997px;top:1070.25px;width:362.72000000000025px;height:30.5px;background:#88d957;box-shadow:0 0 0 1.500px #0c0c0c;"></div>
<div style="left:2259.8599999999997px;top:1084.0px;width:220px;height:3px;background:#e4f2a2;"></div>
<div style="left:2252.8599999999997px;top:1166.25px;width:362.72000000000025px;height:30.5px;background:#88d957;box-shadow:0 0 0 1.500px #0c0c0c;"></div>
<div style="left:2259.8599999999997px;top:1180.0px;width:220px;height:3px;background:#e4f2a2;"></div>
<div style="left:2252.8599999999997px;top:1230.25px;width:362.72000000000025px;height:30.5px;background:#1f261e;border:3.500px solid #86da57;box-shadow:0 0 0 1.500px #0c0c0c;"></div>
<div style="left:2259.8599999999997px;top:1244.0px;width:220px;height:3px;background:#86da57;"></div>
<div style="left:2252.8599999999997px;top:1326.25px;width:362.72000000000025px;height:30.5px;background:#88d957;box-shadow:0 0 0 1.500px #0c0c0c;"></div>
<div style="left:2259.8599999999997px;top:1340.0px;width:220px;height:3px;background:#e4f2a2;"></div>
<div style="left:1150px;top:856px;width:2.2px;height:738px;background:#f4f4f4;"></div>
<svg style="left:1138.5px;top:843px;" width="26" height="27" viewBox="0 0 26 27"><path d="M3 1h20q2 0 2 2v9.500l-12 13l-12-13v-9.500q0-2 2-2z" fill="#c4c4c4" stroke="#8a8a8a" stroke-width="0.800" opacity="0.92"/><rect x="11" y="8" width="2" height="19" fill="#f4f4f4"/></svg>
</body></html>
